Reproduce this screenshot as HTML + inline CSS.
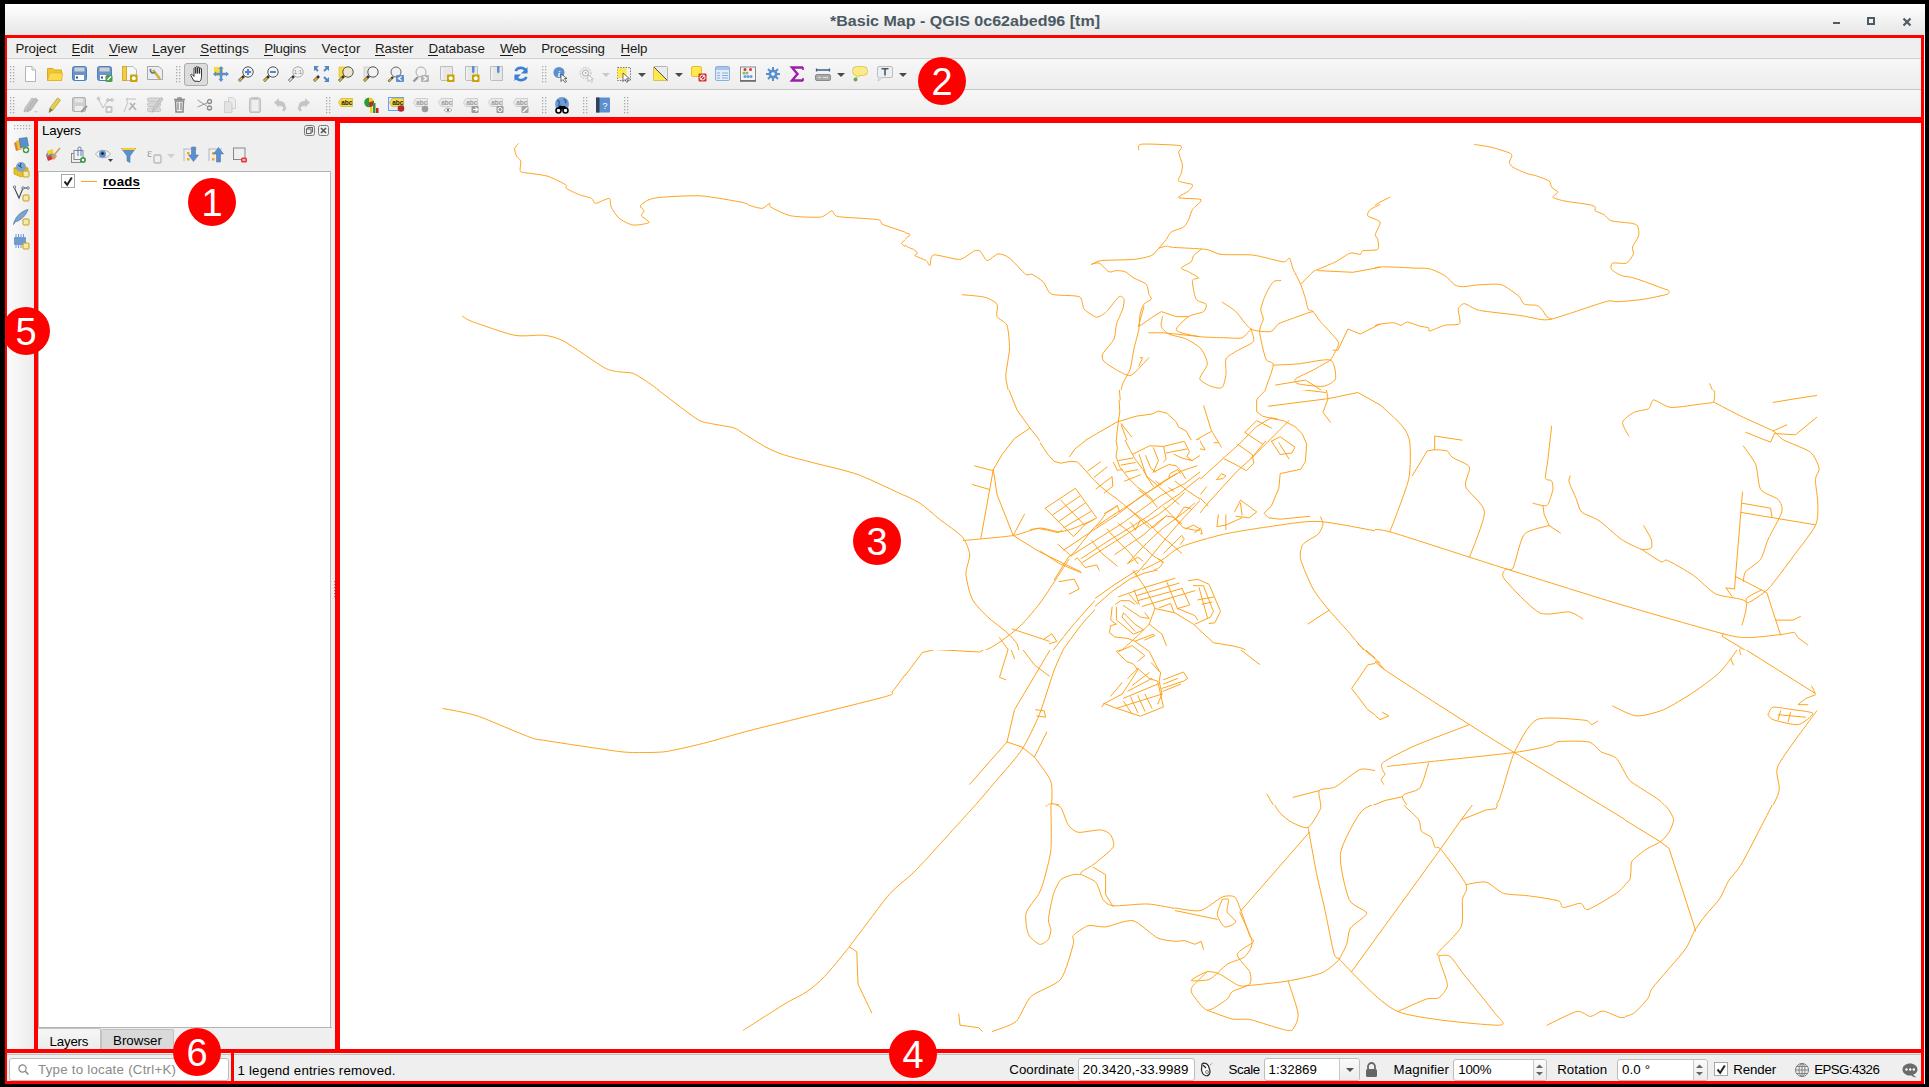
<!DOCTYPE html>
<html><head><meta charset="utf-8">
<style>
*{box-sizing:border-box;margin:0;padding:0}
html,body{width:1929px;height:1087px;overflow:hidden;background:#000}
body{position:relative;font-family:"Liberation Sans",sans-serif;font-size:13.3px;color:#000}
.a{position:absolute}
.t{position:absolute;white-space:pre;line-height:1}
.red{position:absolute;background:#f00}
.circ{position:absolute;width:48px;height:48px;border-radius:50%;background:#f00;color:#fff;font-size:38px;line-height:50px;text-align:center;font-family:"Liberation Sans",sans-serif}
.grip{position:absolute;width:5px;background-image:radial-gradient(circle at 1px 1px,#a8a8a8 0.7px,transparent 1px);background-size:3px 3px}
.box{position:absolute;background:#fff;border:1px solid #b9b9b9;border-radius:3px}
svg.i{position:absolute;overflow:visible}
</style></head><body>
<!-- window -->
<div class="a" style="left:5px;top:4px;width:1920px;height:1080px;background:#efefef"></div>
<!-- title bar -->
<div class="a" style="left:5px;top:4px;width:1920px;height:31px;background:linear-gradient(#ffffff,#e6e6e6)"></div>
<div class="a" style="left:1833px;top:22px;width:7px;height:2px;background:#4d5b64"></div>
<div class="a" style="left:1867px;top:17px;width:8px;height:8px;border:2px solid #4d5b64"></div>
<svg class="a" style="left:1902px;top:17px" width="10" height="10"><path d="M1.5 1.5L8.5 8.5M8.5 1.5L1.5 8.5" stroke="#4d5b64" stroke-width="2.2"/></svg>

<!-- menu bar -->
<div class="a" style="left:7px;top:38px;width:1914px;height:21px;background:#efefef;border-bottom:1px solid #d0d0d0"></div>

<!-- toolbars -->
<div class="a" style="left:7px;top:59px;width:1914px;height:31px;background:linear-gradient(#f7f7f7,#ededed);border-bottom:1px solid #c6c6c6"></div>
<div class="a" style="left:7px;top:90px;width:1914px;height:27px;background:linear-gradient(#f7f7f7,#eeeeee)"></div>

<!-- left strip -->
<div class="a" style="left:7px;top:121px;width:27px;height:928px;background:linear-gradient(90deg,#fbfbfb,#ececec)"></div>

<!-- layers panel -->
<div class="a" style="left:38px;top:121px;width:297px;height:928px;background:#efefef"></div>
<div class="a" style="left:38px;top:171px;width:293px;height:857px;background:#fff;border:1px solid #b4b4b4"></div>

<!-- map -->
<div class="a" style="left:340px;top:121px;width:1581px;height:928px;background:#fff;overflow:hidden">
<svg width="1581" height="928" viewBox="340 121 1581 928" style="position:absolute;left:0;top:0" fill="none" stroke="#ffa31c" stroke-width="1" stroke-linejoin="round" stroke-linecap="round">
<defs><clipPath id="c0"><rect x="340" y="121" width="565" height="269"/></clipPath><clipPath id="c1"><rect x="905" y="121" width="477" height="269"/></clipPath><clipPath id="c2"><rect x="1375" y="121" width="546" height="269"/></clipPath><clipPath id="c3"><rect x="340" y="390" width="565" height="260"/></clipPath><clipPath id="c4"><path clip-rule="evenodd" d="M905 390H1375V650H905Z M1095 570V650H1235V570Z"/></clipPath><clipPath id="c5"><rect x="1375" y="390" width="546" height="260"/></clipPath><clipPath id="c6"><rect x="340" y="650" width="565" height="155"/></clipPath><clipPath id="c7"><path clip-rule="evenodd" d="M905 650H1375V805H905Z M1095 650V725H1235V650Z"/></clipPath><clipPath id="c8"><rect x="1375" y="650" width="546" height="155"/></clipPath><clipPath id="c9"><rect x="340" y="805" width="835" height="244"/></clipPath><clipPath id="c10"><rect x="1175" y="805" width="450" height="244"/></clipPath><clipPath id="c11"><rect x="1625" y="805" width="296" height="244"/></clipPath><clipPath id="c12"><path clip-rule="evenodd" d="M1030 400H1310V560H1030Z M1040 440V560H1200V440Z"/></clipPath><clipPath id="c13"><rect x="1040" y="440" width="160" height="140"/></clipPath><clipPath id="c14"><rect x="1095" y="570" width="140" height="155"/></clipPath><clipPath id="c15"><rect x="340" y="121" width="1581" height="928"/></clipPath></defs><path clip-path="url(#c0)" d="M518.3 143.7 C517.9 144.2 514.8 147.2 514.6 148.6 C514.4 150.1 515.9 154.7 516.6 156.1 C517.3 157.6 520.4 159.5 520.8 161.1 C521.2 162.7 519.9 168.5 520.1 169.8 C520.3 171.1 519.4 171.6 522.6 172.3 C525.7 173.0 541.9 174.6 547.0 176.0 C552.0 177.5 563.3 183.3 565.6 184.7 C567.9 186.2 564.8 187.3 566.4 188.5 C568.0 189.6 576.3 193.5 579.3 194.7 C582.3 195.8 589.9 197.4 591.7 198.4 C593.6 199.4 593.4 203.4 595.5 203.4 C597.5 203.4 607.3 198.0 609.2 198.4 C611.0 198.8 610.0 204.8 611.2 207.1 C612.3 209.4 616.6 216.2 619.1 218.3 C621.6 220.4 629.3 224.5 632.8 225.0 C636.3 225.5 648.0 223.6 649.0 222.5 C650.0 221.5 642.1 217.2 641.5 215.8 C640.9 214.5 644.1 212.0 644.0 210.8 C643.9 209.7 639.7 207.2 640.3 205.9 C640.8 204.6 646.4 200.7 649.0 199.7 C651.6 198.6 656.6 197.6 662.7 197.2 C668.8 196.7 692.1 195.3 701.2 195.9 C710.4 196.5 735.2 201.0 741.0 202.1 C746.8 203.3 748.5 205.1 751.0 205.9 C753.5 206.6 760.0 208.6 762.2 208.4 C764.4 208.1 768.6 203.5 769.7 203.4 C770.7 203.2 768.4 205.7 770.9 207.1 C773.4 208.6 785.0 214.7 790.8 215.8 C796.6 217.0 815.9 217.6 820.7 217.1 C825.5 216.5 829.8 210.9 831.9 210.8 C833.9 210.8 832.7 215.6 838.1 216.6 C843.5 217.6 872.7 218.6 877.9 219.6 C883.1 220.5 879.1 222.8 882.9 224.5 C886.6 226.3 907.8 232.3 910.0 234.5 C912.2 236.7 901.5 241.5 901.5 243.2 C901.5 244.9 909.0 248.7 910.0 249.4 M462.3 316.1 C463.5 316.7 466.2 319.3 472.3 321.6 C478.4 323.8 506.2 333.7 514.6 335.3 C523.0 336.9 538.7 334.5 544.5 335.3 C550.3 336.0 557.4 337.7 564.4 341.5 C571.3 345.3 597.8 364.1 604.2 367.6 C610.6 371.2 615.8 371.2 619.1 371.8 C622.5 372.5 629.6 372.2 632.8 373.3 C636.0 374.4 642.7 378.8 646.5 381.3 C650.3 383.8 663.0 393.4 665.1 395.0"/>
<path clip-path="url(#c1)" d="M900.0 232.0 C901.2 232.3 909.7 233.3 910.0 234.5 C910.2 235.6 902.8 240.5 902.5 242.0 C902.2 243.4 906.2 246.1 907.5 246.9 C908.8 247.8 912.5 248.7 913.7 249.4 C914.8 250.1 917.3 252.4 917.4 253.1 C917.6 253.9 913.9 254.8 914.9 255.6 C915.9 256.5 924.4 259.5 926.1 260.6 C927.9 261.8 929.0 266.3 929.9 265.6 C930.7 264.9 930.1 255.6 933.6 254.9 C937.1 254.2 954.9 259.9 959.7 259.4 C964.5 258.9 972.2 251.5 974.7 250.7 C977.1 249.8 979.4 250.7 980.9 251.9 C982.3 253.1 985.1 260.4 987.1 260.6 C989.1 260.8 995.7 254.2 998.3 253.9 C1000.9 253.6 1006.3 255.7 1009.5 258.1 C1012.7 260.5 1023.0 272.4 1025.7 274.3 C1028.3 276.2 1029.8 273.4 1031.9 274.3 C1033.9 275.2 1040.8 279.4 1043.1 281.8 C1045.4 284.1 1047.6 292.5 1051.8 294.2 C1056.0 295.9 1075.4 295.0 1079.2 296.7 C1082.9 298.4 1082.1 306.8 1084.1 309.1 C1086.2 311.5 1094.0 316.8 1096.6 317.1 C1099.2 317.4 1103.9 314.0 1106.5 311.6 C1109.1 309.2 1116.9 298.1 1119.0 296.7 C1121.0 295.2 1123.5 297.7 1124.0 299.2 C1124.4 300.6 1123.6 306.2 1122.7 309.1 C1121.8 312.0 1117.5 320.6 1116.5 324.1 C1115.5 327.6 1115.6 335.5 1114.0 339.0 C1112.4 342.5 1104.0 351.3 1102.8 353.9 C1101.6 356.5 1102.2 359.4 1104.0 361.4 C1105.9 363.4 1115.8 369.7 1119.0 371.3 C1122.2 372.9 1127.9 376.7 1131.4 375.1 C1134.9 373.5 1146.8 359.7 1148.8 357.7 M1138.9 149.9 C1139.2 149.2 1136.7 144.7 1141.4 144.2 C1146.0 143.6 1174.0 144.9 1178.7 145.4 C1183.3 145.9 1181.2 147.8 1181.2 148.6 C1181.2 149.5 1178.5 150.5 1178.7 152.4 C1178.8 154.3 1182.1 162.3 1182.4 164.8 C1182.7 167.3 1181.6 171.6 1181.2 173.5 C1180.7 175.4 1177.4 179.7 1178.7 181.0 C1180.0 182.3 1191.2 183.6 1192.4 184.7 C1193.5 185.9 1190.2 189.4 1188.6 190.9 C1187.1 192.5 1177.2 196.6 1178.7 197.7 C1180.1 198.7 1199.5 198.3 1201.1 199.7 C1202.7 201.0 1193.8 207.3 1192.4 209.6 C1190.9 211.9 1189.7 217.5 1188.6 219.6 C1187.6 221.6 1185.7 225.6 1183.7 227.0 C1181.6 228.5 1173.3 230.5 1171.2 232.0 C1169.2 233.4 1167.7 237.6 1166.3 239.5 C1164.8 241.4 1160.5 246.3 1158.8 248.2 C1157.0 250.1 1154.2 254.3 1151.3 255.6 C1148.4 256.9 1139.7 258.8 1133.9 259.4 C1128.1 260.0 1106.5 260.0 1101.6 260.6 C1096.6 261.2 1092.8 263.9 1091.6 264.3 M1158.8 248.2 C1159.7 247.9 1164.5 246.3 1166.3 246.2 C1168.0 246.1 1169.1 247.0 1173.7 247.4 C1178.4 247.8 1200.5 248.6 1206.1 249.4 C1211.6 250.2 1215.5 253.7 1221.0 254.4 C1226.5 255.1 1246.1 254.3 1253.3 255.1 C1260.6 256.0 1279.0 261.5 1283.2 261.9 C1287.4 262.2 1288.3 257.3 1289.4 258.1 C1290.6 259.0 1291.9 266.3 1293.2 269.3 C1294.5 272.4 1299.2 280.8 1300.6 284.3 C1302.1 287.7 1304.7 296.3 1305.6 299.2 C1306.5 302.1 1307.2 307.7 1308.1 309.1 C1309.0 310.6 1311.6 310.2 1313.1 311.6 C1314.5 313.1 1317.6 318.1 1320.5 321.6 C1323.4 325.1 1336.2 338.0 1337.9 341.5 C1339.7 345.0 1336.3 349.3 1335.5 351.4 C1334.6 353.6 1331.1 359.1 1330.5 360.1 M1091.6 264.3 C1092.5 264.2 1097.0 262.2 1099.1 263.1 C1101.1 264.0 1107.0 270.9 1109.0 271.8 C1111.1 272.7 1114.6 270.6 1116.5 270.6 C1118.4 270.6 1123.2 270.9 1125.2 271.8 C1127.2 272.7 1131.4 276.6 1133.9 278.0 C1136.4 279.5 1144.6 282.4 1146.3 284.3 C1148.1 286.1 1148.3 292.5 1148.8 294.2 C1149.4 295.9 1151.9 298.0 1151.3 299.2 C1150.7 300.3 1145.2 302.4 1143.9 304.2 C1142.6 305.9 1140.7 311.2 1140.1 314.1 C1139.5 317.0 1139.6 325.0 1138.9 329.0 C1138.2 333.1 1134.9 344.3 1133.9 349.0 C1132.9 353.6 1131.5 364.8 1130.2 368.9 C1128.9 372.9 1123.9 380.7 1122.7 383.8 C1121.5 386.8 1120.5 393.7 1120.2 395.0 M1201.1 249.4 C1200.2 250.1 1194.8 254.2 1193.6 255.6 C1192.5 257.1 1192.6 260.4 1191.1 261.9 C1189.7 263.3 1181.5 266.9 1181.2 268.1 C1180.9 269.2 1186.6 270.7 1188.6 271.8 C1190.7 273.0 1198.2 277.0 1198.6 278.0 C1199.0 279.0 1192.7 278.1 1192.4 280.5 C1192.1 283.0 1194.5 296.4 1196.1 299.2 C1197.7 301.9 1205.2 302.7 1206.1 304.2 C1206.9 305.6 1205.6 310.2 1203.6 311.6 C1201.5 313.1 1191.8 314.4 1188.6 316.6 C1185.5 318.8 1175.0 328.0 1176.2 330.3 C1177.4 332.6 1192.8 335.6 1198.6 336.5 C1204.4 337.4 1220.9 337.6 1226.0 337.8 C1231.1 337.9 1239.2 338.8 1242.1 337.8 C1245.0 336.7 1249.8 330.1 1250.9 329.0 M1138.9 326.6 L1151.3 317.8 L1161.3 311.6 L1176.2 316.6 L1188.6 316.6 M1148.8 332.8 L1163.8 332.8 L1198.6 336.5 M1162.5 316.6 C1162.4 317.8 1160.5 324.5 1161.3 326.6 C1162.0 328.6 1165.8 332.6 1168.7 334.0 C1171.6 335.5 1182.4 337.3 1186.2 339.0 C1189.9 340.7 1198.6 346.0 1201.1 349.0 C1203.6 351.9 1207.5 360.4 1207.3 363.9 C1207.2 367.4 1199.4 376.2 1199.8 378.8 C1200.3 381.4 1208.4 385.3 1211.0 386.3 C1213.7 387.3 1220.5 389.0 1222.2 387.5 C1224.0 386.1 1225.5 377.2 1226.0 373.8 C1226.4 370.5 1224.8 361.5 1226.0 358.9 C1227.1 356.3 1232.7 353.5 1235.9 351.4 C1239.1 349.4 1251.6 344.1 1253.3 341.5 C1255.1 338.9 1251.1 330.5 1250.9 329.0 M1222.2 302.2 C1223.8 303.3 1232.6 308.5 1235.9 311.6 C1239.3 314.8 1246.8 326.7 1250.9 329.0 C1254.9 331.4 1267.6 332.1 1270.8 331.5 C1274.0 331.0 1275.9 325.5 1278.2 324.1 C1280.5 322.6 1287.2 320.4 1290.7 319.1 C1294.2 317.8 1305.5 313.7 1308.1 312.9 C1310.7 312.0 1312.5 311.8 1313.1 311.6 M1280.7 280.5 C1279.8 280.7 1275.0 280.2 1273.3 281.8 C1271.5 283.4 1267.2 291.0 1265.8 294.2 C1264.3 297.4 1261.1 306.2 1260.8 309.1 C1260.5 312.0 1263.4 316.5 1263.3 319.1 C1263.2 321.7 1259.3 326.9 1259.6 331.5 C1259.9 336.2 1264.2 355.0 1265.8 358.9 C1267.4 362.8 1273.5 360.9 1273.3 365.1 C1273.0 369.3 1264.5 391.5 1263.3 395.0 M1300.6 284.3 C1302.1 282.8 1311.0 273.6 1313.1 271.8 C1315.1 270.1 1315.4 270.5 1318.0 269.3 C1320.7 268.2 1331.7 263.7 1335.5 261.9 C1339.2 260.0 1347.5 254.0 1350.4 253.1 C1353.3 252.3 1358.9 254.7 1360.3 254.4 C1361.8 254.1 1360.8 251.2 1362.8 250.7 C1364.9 250.1 1376.0 250.7 1377.8 249.4 C1379.5 248.1 1378.1 241.2 1377.8 239.5 C1377.5 237.7 1375.0 236.5 1375.3 234.5 C1375.5 232.5 1380.9 224.2 1380.0 222.0 C1379.1 219.9 1368.9 217.3 1367.8 215.8 C1366.7 214.4 1368.9 210.9 1370.3 209.6 C1371.7 208.3 1378.9 205.2 1380.0 204.6 M1318.0 270.6 L1352.9 272.3 L1380.0 267.3 M1273.3 365.1 C1276.2 365.0 1291.5 364.5 1298.1 363.9 C1304.8 363.3 1326.1 358.4 1330.5 360.1 C1334.8 361.9 1336.3 375.8 1335.5 378.8 C1334.6 381.9 1327.4 385.7 1323.0 386.3 C1318.7 386.9 1301.3 384.7 1298.1 383.8 C1294.9 382.9 1293.9 380.4 1295.6 378.8 C1297.4 377.2 1309.0 372.3 1313.1 370.1 C1317.1 367.9 1328.4 361.3 1330.5 360.1 M1275.7 385.0 L1305.6 380.1 L1323.0 391.3 L1333.0 395.0 M962.2 294.7 C964.8 295.0 980.5 296.1 984.6 297.2 C988.7 298.3 995.6 301.9 997.0 304.2 C998.5 306.4 995.9 314.1 997.0 316.6 C998.2 319.1 1005.5 321.5 1007.0 325.3 C1008.4 329.1 1009.6 343.0 1009.5 349.0 C1009.3 354.9 1005.8 371.0 1005.8 376.3 C1005.8 381.7 1009.1 392.8 1009.5 395.0 M1380.0 324.1 L1360.3 334.0 L1347.9 329.0 L1337.9 350.2 L1333.0 350.2 M1143.9 306.6 L1138.4 326.6 M1140.1 357.7 L1142.6 357.7 L1138.9 366.4"/>
<path clip-path="url(#c2)" d="M1389.9 197.2 L1380.0 202.1 L1370.0 208.4 M1474.5 144.4 C1476.5 144.8 1487.9 146.4 1491.9 147.4 C1496.0 148.4 1507.0 151.9 1509.3 152.9 C1511.7 153.9 1511.8 155.0 1511.8 156.1 C1511.8 157.2 1509.2 161.0 1509.3 162.3 C1509.5 163.6 1511.0 166.0 1513.1 167.3 C1515.1 168.6 1524.0 172.5 1526.8 173.5 C1529.5 174.5 1534.1 175.1 1536.7 176.0 C1539.3 176.9 1547.4 179.7 1549.2 181.0 C1550.9 182.3 1550.6 185.9 1551.6 187.2 C1552.7 188.5 1557.7 191.0 1557.9 192.2 C1558.0 193.3 1552.2 196.1 1552.9 197.2 C1553.6 198.2 1559.9 200.0 1564.1 200.9 C1568.3 201.8 1585.3 203.9 1589.0 204.6 C1592.6 205.4 1594.5 206.4 1595.2 207.1 C1595.9 207.8 1594.2 210.0 1595.2 210.8 C1596.2 211.7 1602.0 213.4 1603.9 214.6 C1605.8 215.7 1608.2 219.8 1611.4 220.8 C1614.6 221.8 1628.2 222.7 1631.3 223.3 C1634.3 223.9 1636.6 224.3 1637.5 225.8 C1638.4 227.2 1639.3 233.3 1638.7 235.7 C1638.2 238.2 1633.2 244.8 1632.5 246.9 C1631.9 249.1 1634.0 252.5 1633.3 254.4 C1632.5 256.3 1628.7 262.1 1626.3 263.1 C1623.9 264.1 1614.4 262.4 1612.6 263.1 C1610.9 263.8 1610.4 267.9 1611.4 269.3 C1612.4 270.8 1619.0 274.6 1621.3 275.5 C1623.6 276.5 1628.7 276.6 1631.3 277.3 C1633.9 278.0 1639.9 279.9 1643.7 281.3 C1647.5 282.6 1660.7 287.7 1663.6 288.7 C1666.5 289.8 1668.2 289.8 1668.6 290.5 C1669.0 291.1 1670.3 293.2 1667.4 294.2 C1664.5 295.2 1649.4 298.3 1643.7 299.2 C1638.1 300.1 1622.9 301.5 1618.8 301.7 C1614.8 301.9 1611.8 300.5 1608.9 300.9 C1606.0 301.4 1598.3 304.0 1594.0 305.4 C1589.6 306.8 1576.5 311.3 1571.6 312.9 C1566.6 314.5 1555.1 318.3 1551.6 319.1 C1548.2 319.9 1545.5 320.0 1541.7 319.6 C1537.9 319.2 1526.6 316.4 1519.3 315.4 C1512.0 314.3 1485.9 311.7 1479.5 310.4 C1473.1 309.0 1467.0 303.8 1464.6 303.7 C1462.1 303.5 1458.9 306.8 1458.3 309.1 C1457.8 311.5 1461.2 321.7 1459.6 323.6 C1458.0 325.5 1448.1 324.4 1444.7 325.3 C1441.2 326.2 1431.6 330.7 1429.7 331.0 C1427.8 331.3 1429.6 328.4 1428.5 327.8 C1427.3 327.2 1422.2 326.7 1419.8 326.1 C1417.3 325.4 1409.5 322.2 1407.3 322.1 C1405.1 322.0 1402.7 325.2 1401.1 325.3 C1399.5 325.4 1396.1 323.0 1393.6 322.8 C1391.2 322.7 1382.7 323.6 1380.0 324.1 C1377.2 324.6 1371.2 326.7 1370.0 327.1 M1370.0 268.8 C1371.5 268.6 1377.2 266.9 1382.4 266.8 C1387.7 266.7 1409.3 267.8 1414.8 268.1 C1420.3 268.3 1426.2 268.0 1429.7 268.8 C1433.2 269.7 1441.7 273.7 1444.7 275.5 C1447.6 277.4 1452.4 283.4 1454.6 284.8 C1456.8 286.1 1460.7 286.7 1463.3 286.7 C1465.9 286.8 1472.8 285.3 1477.0 285.0 C1481.2 284.7 1495.6 283.8 1499.4 284.3 C1503.2 284.7 1507.0 287.8 1509.3 289.2 C1511.7 290.7 1517.6 295.0 1519.3 296.7 C1521.0 298.4 1522.2 303.1 1524.3 304.2 C1526.3 305.2 1534.7 304.8 1536.7 305.4 C1538.8 306.0 1540.5 307.8 1541.7 309.1 C1542.9 310.4 1545.5 315.4 1546.7 316.6 C1547.8 317.8 1551.1 318.8 1551.6 319.1 M1709.7 383.8 L1714.6 395.0"/>
<path clip-path="url(#c3)" d="M651.5 385.0 C656.7 388.9 689.3 414.1 696.3 418.6 C703.2 423.1 706.8 422.5 711.2 423.6 C715.5 424.6 729.8 426.6 733.6 427.8 C737.4 429.0 739.8 431.3 743.5 433.5 C747.3 435.8 761.3 444.7 765.9 447.2 C770.6 449.7 778.1 452.9 783.3 454.7 C788.6 456.4 802.0 459.8 810.7 462.1 C819.4 464.5 846.4 470.4 858.0 474.6 C869.6 478.8 903.9 495.5 910.0 498.2"/>
<path clip-path="url(#c4)" d="M1007.0 385.0 L1017.0 409.9 L1029.9 428.0 M1119.0 385.0 L1120.2 399.9 M1049.3 655.0 C1052.2 651.4 1067.8 631.3 1074.2 623.9 C1080.6 616.5 1097.1 597.3 1104.0 591.5 C1111.0 585.7 1127.2 577.7 1133.9 574.1 C1140.6 570.5 1155.8 563.6 1161.3 560.4 C1166.8 557.2 1173.9 549.8 1181.2 546.7 C1188.4 543.7 1213.3 536.6 1223.5 534.3 C1233.6 532.0 1257.2 528.3 1268.3 526.8 C1279.3 525.3 1305.0 520.8 1318.0 521.4 C1331.1 521.9 1372.8 530.6 1380.0 531.8 M1059.3 655.0 C1062.2 651.1 1078.0 628.5 1084.1 621.4 C1090.2 614.3 1105.1 599.2 1111.5 594.0 C1117.9 588.8 1133.4 579.7 1138.9 576.6 C1144.4 573.6 1156.0 569.6 1158.8 567.9 C1161.5 566.2 1162.5 562.7 1162.5 561.7 C1162.5 560.7 1159.2 559.5 1158.8 559.2 M900.0 493.2 C902.3 494.4 915.3 500.1 919.9 503.2 C924.6 506.2 934.9 515.5 939.8 519.4 C944.7 523.3 958.7 532.7 962.2 536.8 C965.7 540.9 969.2 549.9 969.7 554.2 C970.1 558.6 965.7 568.9 965.9 574.1 C966.2 579.3 969.7 594.1 972.2 599.0 C974.6 603.9 983.0 612.5 987.1 616.4 C991.2 620.3 1003.5 629.4 1007.0 632.6 C1010.5 635.8 1015.5 641.2 1017.0 643.8 C1018.4 646.4 1019.1 653.7 1019.4 655.0 M963.5 540.5 C969.3 539.9 1004.4 537.0 1013.2 535.5 C1022.1 534.1 1034.0 528.5 1039.3 528.1 C1044.7 527.6 1055.2 531.8 1059.3 531.8 C1063.3 531.8 1070.1 529.5 1074.2 528.1 C1078.2 526.6 1091.8 520.4 1094.1 519.4 M1029.4 428.5 L1014.5 438.5 L1002.0 454.7 L993.3 469.6 L980.9 538.0 M993.3 469.6 L997.0 494.5 L1013.2 535.5 L1024.4 514.4 M1013.2 535.5 L1039.3 551.7 L1080.4 571.6 M974.7 465.9 L993.3 470.8 M972.2 484.5 L989.6 489.5 M1270.8 385.0 L1258.3 397.4 L1256.8 399.9 M1320.5 516.9 C1320.8 517.8 1323.3 522.3 1323.0 524.3 C1322.7 526.4 1320.4 532.0 1318.0 534.3 C1315.7 536.6 1305.1 541.4 1303.1 544.3 C1301.1 547.2 1299.5 554.0 1300.6 559.2 C1301.8 564.4 1309.9 583.2 1313.1 589.0 C1316.3 594.8 1323.9 604.0 1328.0 609.0 C1332.1 613.9 1343.3 626.0 1347.9 631.3 C1352.5 636.7 1365.5 652.2 1367.8 655.0 M1119.0 596.5 L1173.7 579.1 M1128.9 591.5 L1178.7 584.1 L1183.7 596.5 L1188.6 609.0 M1131.4 604.0 L1183.7 591.5 M1136.4 584.1 L1151.3 613.9 M1168.7 581.6 L1176.2 604.0 M1188.6 581.6 C1190.1 581.6 1198.5 580.4 1201.1 581.6 C1203.7 582.7 1209.0 588.0 1211.0 591.5 C1213.1 595.0 1218.2 607.7 1218.5 611.4 C1218.8 615.2 1216.1 622.4 1213.5 623.9 C1210.9 625.3 1199.9 625.6 1196.1 623.9 C1192.3 622.1 1185.2 611.3 1181.2 609.0 C1177.1 606.6 1163.9 604.0 1161.3 604.0 C1158.7 604.0 1159.1 608.4 1158.8 609.0 M1198.6 589.0 L1206.1 621.4 M1196.1 604.0 L1213.5 601.5 M1114.0 604.0 C1115.7 603.4 1126.0 598.4 1128.9 599.0 C1131.8 599.6 1136.6 606.0 1138.9 609.0 C1141.2 611.9 1148.0 620.7 1148.8 623.9 C1149.7 627.1 1147.5 633.4 1146.3 636.3 C1145.2 639.2 1140.0 646.6 1138.9 648.8 C1137.7 650.9 1136.7 654.3 1136.4 655.0 M1111.5 609.0 L1111.5 633.8 L1119.0 646.3 L1124.0 655.0 M1119.0 613.9 L1131.4 633.8 L1143.9 643.8 M1114.0 623.9 L1133.9 641.3 L1146.3 655.0 M1158.8 609.0 C1162.9 610.7 1188.1 620.4 1193.6 623.9 C1199.1 627.4 1202.6 636.5 1206.1 638.8 C1209.5 641.1 1219.1 642.6 1223.5 643.8 C1227.8 644.9 1240.2 647.5 1243.4 648.8 C1246.6 650.1 1250.0 654.3 1250.9 655.0 M1268.3 406.2 L1328.0 398.7 L1357.9 392.5 L1380.0 404.9 M1325.5 385.0 L1328.0 398.7 L1323.0 412.4 L1330.5 422.3 M1273.3 386.2 L1325.5 392.5 M1308.1 623.9 L1315.6 618.9 L1329.2 610.2 M1044.3 638.8 L1051.8 633.8 L1056.8 641.3 L1049.3 643.8 M1059.3 581.6 L1074.2 579.1 L1079.2 589.0 L1069.2 594.0 M1012.0 628.9 L1049.3 641.3 M999.5 637.6 L1012.0 655.0 M900.0 655.0 C902.9 654.5 915.3 651.7 924.9 651.3 C934.5 650.8 971.4 653.9 982.1 651.3 C992.9 648.6 1010.3 634.4 1017.0 628.9 C1023.6 623.3 1034.4 610.4 1039.3 604.0 C1044.3 597.6 1055.8 579.3 1059.3 574.1 C1062.7 568.9 1068.0 560.9 1069.2 559.2"/>
<path clip-path="url(#c5)" d="M1370.0 529.3 C1372.3 529.6 1378.3 528.6 1389.9 531.8 C1401.5 535.1 1455.9 552.8 1469.5 557.2 C1483.2 561.5 1489.4 563.7 1506.9 569.1 C1524.3 574.6 1593.6 596.4 1618.8 604.0 C1644.1 611.5 1708.2 629.9 1723.3 633.8 C1738.4 637.8 1741.6 637.5 1748.2 637.6 C1754.9 637.7 1775.2 635.2 1780.6 634.6 C1785.9 634.0 1792.2 632.2 1794.3 632.6 C1796.3 632.9 1796.4 636.1 1798.0 637.6 C1799.6 639.0 1806.8 644.2 1807.9 645.0 M1370.0 401.2 C1371.2 401.6 1376.2 402.0 1380.0 404.9 C1383.7 407.8 1398.9 421.7 1402.3 426.1 C1405.8 430.4 1409.1 436.0 1409.8 442.2 C1410.5 448.5 1410.9 469.1 1408.6 479.6 C1406.2 490.0 1392.1 525.7 1389.9 531.8 M1412.3 475.8 L1427.2 450.9 L1434.7 449.7 L1434.7 436.0 L1462.1 440.2 M1434.7 449.7 C1436.1 449.8 1445.1 450.1 1447.1 450.9 C1449.2 451.8 1449.8 455.6 1452.1 457.2 C1454.4 458.8 1465.0 463.2 1467.0 464.6 C1469.1 466.1 1469.7 467.0 1469.5 469.6 C1469.4 472.2 1464.1 482.1 1465.8 487.0 C1467.5 492.0 1484.0 503.7 1484.5 511.9 C1484.9 520.1 1471.3 551.9 1469.5 557.2 M1551.6 426.1 C1551.2 430.0 1548.6 453.6 1547.9 459.7 C1547.2 465.7 1545.0 475.8 1545.4 478.3 C1545.9 480.8 1550.8 479.5 1551.6 480.8 C1552.5 482.1 1553.3 486.8 1552.9 489.5 C1552.5 492.3 1549.1 502.6 1547.9 504.4 C1546.8 506.3 1544.7 505.8 1542.9 505.7 C1541.2 505.5 1534.1 503.5 1533.0 503.2 M1542.9 505.7 L1544.2 514.4 L1549.2 525.6 L1560.4 533.1 M1549.2 525.6 C1546.3 526.6 1528.5 529.4 1524.3 534.3 C1520.1 539.2 1515.3 563.8 1513.1 567.9 C1510.9 572.0 1506.6 567.8 1505.6 569.1 C1504.6 570.4 1500.5 574.0 1504.4 579.1 C1508.3 584.2 1531.7 608.9 1539.2 612.7 C1546.8 616.5 1564.0 611.2 1569.1 611.9 C1574.1 612.7 1581.2 618.1 1582.8 618.9 M1570.3 475.8 C1570.2 476.6 1568.3 479.3 1569.1 482.0 C1569.8 484.8 1575.1 496.0 1576.5 499.5 C1578.0 502.9 1578.9 509.4 1581.5 511.9 C1584.1 514.4 1594.3 517.4 1598.9 520.6 C1603.6 523.8 1616.4 535.9 1621.3 539.3 C1626.3 542.6 1637.7 548.2 1641.2 549.2 C1644.7 550.2 1650.0 549.1 1651.2 548.0 C1652.3 546.8 1652.1 541.9 1651.2 539.3 C1650.3 536.7 1644.6 527.2 1643.7 525.6 M1641.2 549.2 C1643.6 550.7 1658.1 560.4 1661.1 561.7 C1664.2 563.0 1663.6 558.8 1667.4 560.4 C1671.1 562.0 1687.8 571.4 1693.5 575.4 C1699.1 579.3 1709.8 591.0 1715.9 594.0 C1722.0 597.1 1742.7 597.9 1745.7 601.5 C1748.8 605.1 1742.4 622.4 1742.0 625.1 M1628.8 436.0 C1628.1 434.4 1622.0 425.1 1622.6 422.3 C1623.1 419.6 1630.7 414.0 1633.8 412.4 C1636.8 410.8 1646.4 410.1 1648.7 408.6 C1651.0 407.2 1651.1 400.1 1653.7 399.9 C1656.3 399.8 1665.3 407.0 1671.1 407.4 C1676.9 407.8 1698.5 404.3 1703.4 403.7 C1708.4 403.0 1712.1 403.2 1713.4 401.9 C1714.7 400.6 1714.9 394.4 1714.6 392.5 C1714.3 390.5 1711.3 385.9 1710.9 385.0 M1713.4 401.9 C1716.9 403.7 1736.3 414.0 1743.3 417.3 C1750.2 420.7 1768.5 428.4 1773.1 431.0 C1777.8 433.6 1778.7 437.3 1783.1 439.7 C1787.4 442.2 1806.2 448.8 1810.4 452.2 C1814.6 455.5 1818.6 465.2 1819.1 468.4 C1819.7 471.6 1815.6 475.3 1815.4 479.6 C1815.3 483.8 1817.9 499.1 1817.9 504.4 C1817.9 509.8 1818.3 519.5 1815.4 525.6 C1812.5 531.7 1798.5 549.3 1793.0 556.7 C1787.5 564.1 1773.4 583.7 1768.1 589.0 C1762.9 594.4 1750.7 601.7 1748.2 602.7 C1745.8 603.7 1745.5 599.2 1747.0 597.8 C1748.4 596.3 1759.1 591.2 1760.7 590.3 M1773.1 431.0 L1786.8 424.8 M1745.7 432.3 L1770.6 442.2 L1774.4 433.5 L1795.5 434.8 L1816.7 417.3 M1773.1 402.4 L1795.5 398.7 L1816.7 395.5 M1743.3 446.0 C1744.7 448.1 1753.7 459.5 1755.7 464.6 C1757.7 469.7 1758.1 485.4 1760.7 489.5 C1763.3 493.6 1775.6 496.9 1778.1 499.5 C1780.6 502.1 1783.0 507.3 1781.8 511.9 C1780.7 516.6 1770.6 533.8 1768.1 539.3 C1765.7 544.8 1763.3 555.4 1760.7 559.2 C1758.1 563.0 1747.8 569.0 1745.7 571.6 C1743.7 574.2 1743.5 580.4 1743.3 581.6 M1742.5 492.0 L1734.5 589.0 L1725.8 587.8 L1732.1 596.5 M1742.0 503.2 L1770.6 508.2 L1771.9 516.9 M1740.8 512.4 L1815.4 524.8 M1735.8 576.6 L1766.9 592.8 L1780.6 635.1 M1775.6 620.1 L1793.0 620.1 L1800.5 616.4 M1723.3 633.8 L1722.1 636.3 L1753.2 655.0 M1733.3 655.0 L1740.8 648.8"/>
<path clip-path="url(#c6)" d="M442.9 708.5 C446.9 709.3 467.2 712.6 477.3 715.9 C487.4 719.3 521.4 734.2 529.5 737.1 C537.7 740.0 536.5 739.1 547.0 740.8 C557.4 742.5 608.1 750.1 619.1 751.5 C630.1 752.9 636.0 752.5 641.5 752.5 C647.0 752.5 659.1 752.6 666.4 751.5 C673.6 750.4 693.6 745.8 703.7 743.3 C713.9 740.7 732.6 735.0 753.5 729.6 C774.4 724.2 866.6 701.8 882.9 697.3 C899.1 692.8 889.7 694.5 892.8 691.0 C896.0 687.6 908.0 670.6 910.0 667.9 M872.9 915.0 L890.3 893.8 L910.0 875.2"/>
<path clip-path="url(#c7)" d="M900.0 682.3 L922.4 652.5 L934.8 649.5 L979.6 652.0 L992.1 645.0 M1009.5 645.0 L999.5 677.3 L1005.8 679.8 M1009.5 645.0 L1014.5 658.7 M1019.4 645.0 L1034.4 664.9 L1049.3 676.1 M1053.0 645.0 L1014.5 709.7 L1007.0 742.0 L969.7 784.3 M1065.5 645.0 C1064.2 647.9 1057.3 661.8 1054.3 669.9 C1051.2 678.0 1043.1 705.4 1039.3 714.7 C1035.6 724.0 1026.6 742.3 1021.9 749.5 C1017.3 756.8 1008.0 767.0 999.5 776.9 C991.1 786.8 961.4 821.6 949.8 834.1 C938.2 846.6 905.8 878.1 900.0 883.9 M1007.0 742.0 L1021.9 747.0 L1034.4 757.0 L1046.8 732.1 M1035.6 709.7 L1044.3 710.9 L1045.6 717.2 L1036.9 715.9 M1034.4 757.0 C1036.3 759.7 1048.5 775.1 1050.5 780.6 C1052.6 786.1 1051.9 796.3 1051.8 804.3 C1051.6 812.2 1050.8 839.8 1049.3 849.0 C1047.8 858.3 1042.1 876.2 1039.3 883.9 C1036.6 891.6 1027.3 911.4 1025.7 915.0 M1046.8 806.7 C1047.2 806.4 1048.8 803.8 1050.5 803.8 C1052.3 803.8 1059.3 803.8 1061.7 806.7 C1064.2 809.7 1069.4 826.0 1071.7 829.1 C1074.0 832.3 1077.9 833.6 1081.6 833.6 C1085.4 833.7 1100.6 829.0 1104.0 829.6 C1107.5 830.3 1110.5 836.8 1111.5 839.1 C1112.5 841.4 1115.1 845.9 1112.8 849.0 C1110.4 852.2 1095.4 863.7 1091.6 866.5 C1087.8 869.2 1084.0 870.8 1080.4 872.7 C1076.8 874.6 1063.5 879.6 1060.5 882.6 C1057.4 885.7 1055.0 895.0 1054.3 898.8 C1053.6 902.6 1054.3 913.1 1054.3 915.0 M1091.6 866.5 C1093.1 867.2 1102.6 870.1 1104.0 872.7 C1105.5 875.3 1102.9 884.9 1104.0 888.9 C1105.2 892.8 1108.5 904.4 1114.0 906.3 C1119.5 908.2 1141.2 904.5 1151.3 905.0 C1161.5 905.6 1192.7 912.6 1201.1 911.3 C1209.5 909.9 1219.4 895.3 1223.5 893.8 C1227.5 892.4 1233.9 896.3 1235.9 898.8 C1238.0 901.3 1240.3 913.1 1240.9 915.0 M1080.4 872.7 L1094.1 883.9 L1096.6 893.8 L1109.0 906.3 M1223.5 915.0 L1221.0 906.3 L1226.0 898.8 L1228.5 908.8 M1240.9 913.7 C1248.9 903.7 1300.0 840.2 1309.3 827.9 C1318.6 815.6 1319.4 812.3 1320.5 808.0 C1321.7 803.6 1317.5 793.0 1319.3 790.6 C1321.0 788.1 1330.7 789.3 1335.5 786.8 C1340.2 784.4 1355.1 771.2 1360.3 769.4 C1365.5 767.7 1377.7 771.6 1380.0 771.9 M1293.2 797.3 L1319.3 790.6 M1267.0 794.3 L1275.7 809.2 L1308.1 827.9 M1309.3 827.9 L1323.0 893.8 L1325.5 915.0 M1380.0 801.8 L1360.3 811.7 L1339.2 854.0 L1350.4 898.8 L1372.8 915.0 M1380.0 662.4 L1367.8 664.9 L1351.6 688.5 L1367.8 709.7 L1380.0 718.4 M1360.3 645.0 L1380.0 662.4 M1226.0 645.0 L1235.9 646.2 L1259.6 664.4 M1116.5 645.0 C1117.6 646.7 1124.1 657.6 1126.4 659.9 C1128.8 662.3 1135.5 662.9 1136.4 664.9 C1137.3 666.9 1135.4 674.7 1133.9 677.3 C1132.5 680.0 1126.9 685.0 1124.0 687.3 C1121.0 689.6 1111.3 695.2 1109.0 697.3 C1106.7 699.3 1103.2 703.4 1104.0 704.7 C1104.9 706.0 1114.2 708.7 1116.5 708.5 C1118.8 708.2 1120.2 704.0 1124.0 702.2 C1127.7 700.5 1144.5 695.0 1148.8 693.5 C1153.2 692.1 1159.5 688.5 1161.3 689.8 C1163.0 691.1 1166.1 701.7 1163.8 704.7 C1161.4 707.8 1145.4 714.6 1141.4 715.9 C1137.3 717.2 1131.5 717.8 1128.9 715.9 C1126.3 714.0 1120.1 701.6 1119.0 699.7 M1132.7 645.0 L1146.3 652.5 L1158.8 668.6 L1161.3 677.3 L1161.3 689.8 M1161.3 679.8 L1183.7 671.1 L1187.4 677.3 L1163.8 692.3 M1163.8 686.1 L1181.2 679.8 M1126.4 650.0 C1128.5 650.8 1143.4 655.1 1143.9 657.4 C1144.3 659.8 1132.8 666.8 1130.2 669.9 C1127.6 672.9 1121.2 681.4 1121.5 683.6 C1121.8 685.7 1129.2 688.7 1132.7 688.5 C1136.1 688.4 1149.1 683.1 1151.3 682.3 M1131.4 672.4 L1146.3 669.9 L1158.8 682.3 L1148.8 694.8 L1128.9 694.8 M1124.0 704.7 L1146.3 692.3 M1128.9 712.2 L1148.8 697.3 M1138.9 694.8 L1146.3 709.7 M1131.4 699.7 L1138.9 712.2 M1141.4 674.9 L1151.3 687.3 M1119.0 687.3 L1126.4 699.7 M1114.0 692.3 L1121.5 704.7 M1138.9 652.5 L1148.8 657.4 M1151.3 662.4 L1158.8 669.9"/>
<path clip-path="url(#c8)" d="M1370.0 655.0 C1371.7 656.7 1373.3 661.8 1384.9 669.9 C1396.5 678.0 1454.4 715.0 1469.5 724.6 C1484.6 734.3 1492.0 738.9 1514.3 752.5 C1536.7 766.1 1643.0 830.3 1661.1 841.6 C1679.3 852.8 1666.5 840.5 1669.8 849.0 C1673.2 857.6 1687.4 907.3 1689.8 915.0 M1370.0 663.7 L1377.5 661.9 L1384.9 669.9 M1370.0 710.9 L1380.0 719.7 L1388.7 715.9 L1382.4 712.2 M1469.5 724.6 C1463.1 727.1 1424.8 741.4 1414.8 745.8 C1404.8 750.1 1387.5 759.2 1383.7 762.0 C1379.9 764.7 1382.3 768.0 1382.4 769.4 C1382.6 770.9 1385.1 773.2 1384.9 774.4 C1384.8 775.6 1381.3 778.2 1381.2 779.4 C1381.1 780.5 1383.4 783.8 1383.7 784.3 M1387.4 766.4 C1392.1 765.9 1412.4 763.6 1427.2 762.0 C1442.0 760.3 1500.1 754.4 1514.3 752.5 C1528.5 750.6 1543.9 747.1 1549.2 745.8 C1554.4 744.5 1554.5 742.0 1559.1 741.5 C1563.8 741.1 1584.0 740.8 1589.0 742.0 C1593.9 743.3 1598.2 750.1 1601.4 752.0 C1604.6 753.9 1613.2 755.0 1616.3 758.2 C1619.5 761.4 1626.2 776.0 1628.8 779.4 C1631.4 782.7 1635.0 784.2 1638.7 786.8 C1642.5 789.4 1657.1 798.0 1661.1 801.8 C1665.2 805.5 1672.7 815.4 1673.6 819.2 C1674.4 823.0 1670.1 831.5 1668.6 834.1 C1667.1 836.7 1663.7 839.8 1661.1 841.6 C1658.5 843.3 1649.7 846.7 1646.2 849.0 C1642.7 851.4 1633.0 858.0 1631.3 861.5 C1629.5 865.0 1632.1 876.3 1631.3 878.9 C1630.4 881.5 1625.6 882.4 1623.8 883.9 C1622.1 885.3 1620.4 888.4 1616.3 891.3 C1612.3 894.2 1592.7 907.3 1589.0 908.8 C1585.2 910.2 1586.9 903.9 1584.0 903.8 C1581.1 903.6 1567.0 907.8 1564.1 907.5 C1561.2 907.2 1563.2 902.8 1559.1 901.3 C1555.0 899.8 1535.6 896.1 1529.3 895.1 C1522.9 894.1 1509.3 894.0 1504.4 892.6 C1499.4 891.1 1491.3 883.7 1487.0 882.6 C1482.6 881.6 1470.2 884.3 1467.0 883.9 C1463.9 883.4 1462.6 882.7 1459.6 878.9 C1456.5 875.1 1443.8 856.2 1440.9 851.5 C1438.0 846.9 1437.2 842.6 1434.7 839.1 C1432.2 835.6 1423.5 826.6 1419.8 821.7 C1416.0 816.7 1402.3 800.7 1402.3 796.8 C1402.3 792.9 1416.7 792.0 1419.8 788.1 C1422.8 784.2 1427.5 766.1 1428.5 763.2 M1370.0 806.7 L1384.9 800.5 L1402.3 796.8 M1392.4 915.0 C1397.9 907.3 1431.5 860.2 1439.7 849.0 C1447.8 837.9 1456.3 823.7 1462.1 819.2 C1467.9 814.7 1485.1 812.8 1489.4 810.5 C1493.8 808.2 1496.5 806.0 1499.4 799.3 C1502.3 792.5 1510.0 761.8 1514.3 752.5 C1518.7 743.2 1528.6 723.4 1536.7 719.7 C1544.8 715.9 1577.6 719.6 1584.0 720.1 C1590.4 720.7 1589.9 724.5 1591.5 724.6 C1593.1 724.7 1597.0 721.3 1597.7 720.9 M1467.0 883.9 L1460.8 898.8 L1463.3 915.0 M1612.6 706.0 C1615.4 707.1 1630.3 715.5 1636.3 715.9 C1642.2 716.4 1656.9 712.5 1663.6 709.7 C1670.3 706.9 1687.1 696.5 1693.5 692.3 C1699.9 688.1 1714.0 677.5 1718.4 673.6 C1722.7 669.7 1728.5 661.6 1730.8 658.7 C1733.1 655.8 1737.1 649.2 1738.3 648.7 C1739.4 648.3 1740.5 654.2 1740.8 655.0 M1738.3 645.0 L1815.4 693.5 L1811.7 686.1 M1815.4 694.8 L1805.5 698.5 L1798.0 704.7 L1807.9 704.7 M1816.7 710.9 C1812.2 717.3 1782.6 756.0 1778.1 765.7 C1773.6 775.4 1782.2 783.1 1778.1 794.3 C1774.0 805.5 1749.6 849.6 1743.3 861.5 C1736.9 873.4 1727.7 890.1 1723.3 896.3 C1719.0 902.6 1708.0 912.8 1705.9 915.0 M1768.1 714.7 C1768.7 713.8 1770.2 707.8 1773.1 707.2 C1776.0 706.6 1788.4 709.0 1793.0 709.7 C1797.7 710.4 1812.3 711.7 1812.9 713.4 C1813.5 715.2 1802.6 723.9 1798.0 724.6 C1793.3 725.4 1776.6 720.8 1773.1 719.7 C1769.6 718.5 1768.7 715.3 1768.1 714.7 M1780.6 710.9 L1778.1 719.7 M1790.5 712.2 L1788.0 722.1 M1778.1 714.7 L1805.5 717.2 M1730.8 658.7 L1733.3 664.9"/>
<path clip-path="url(#c9)" d="M979.9 800.0 C975.7 804.6 951.6 831.4 943.9 839.8 C936.2 848.2 920.4 865.8 914.0 872.2 C907.6 878.5 896.7 885.8 889.1 894.6 C881.6 903.3 856.8 937.2 849.3 946.8 C841.8 956.4 829.4 971.4 824.4 976.7 C819.5 981.9 811.6 988.4 807.0 991.6 C802.4 994.8 792.0 999.5 784.6 1004.0 C777.2 1008.5 748.3 1027.1 743.5 1030.2 M849.3 946.8 L856.8 951.8 L858.0 984.1 L871.7 1012.8 M1050.9 803.7 C1050.9 809.1 1051.7 840.6 1050.9 849.8 C1050.0 858.9 1044.8 876.9 1043.4 882.1 C1041.9 887.3 1040.4 890.9 1038.4 894.6 C1036.4 898.2 1027.1 908.6 1026.0 913.2 C1024.8 917.9 1026.9 930.7 1028.5 934.4 C1030.1 938.0 1037.3 943.7 1039.7 944.3 C1042.0 944.9 1047.1 941.1 1048.4 939.3 C1049.7 937.6 1050.9 931.7 1050.9 929.4 C1050.9 927.1 1048.1 923.5 1048.4 919.4 C1048.7 915.4 1051.9 899.2 1053.3 894.6 C1054.8 889.9 1058.5 881.9 1060.8 879.6 C1063.1 877.3 1070.9 875.2 1073.3 874.7 C1075.6 874.1 1079.8 874.7 1080.7 874.7 M1045.9 806.2 C1046.5 805.9 1049.1 803.6 1050.9 803.7 C1052.6 803.9 1058.8 805.0 1060.8 807.5 C1062.8 809.9 1066.2 822.0 1068.3 824.9 C1070.3 827.8 1074.5 831.8 1078.2 832.3 C1082.0 832.9 1096.8 829.6 1100.6 829.9 C1104.4 830.2 1109.1 832.8 1110.6 834.8 C1112.0 836.9 1115.1 843.8 1113.1 847.3 C1111.0 850.8 1096.9 861.6 1093.2 864.7 C1089.4 867.7 1080.4 871.4 1080.7 873.4 C1081.0 875.4 1093.0 879.1 1095.6 882.1 C1098.3 885.2 1101.1 896.8 1103.1 899.5 C1105.1 902.3 1107.8 905.2 1113.1 905.8 C1118.3 906.3 1140.1 903.6 1147.9 904.0 C1155.7 904.4 1176.3 908.8 1180.0 909.5 M1093.2 867.2 L1105.6 874.7 L1105.6 894.6 L1113.1 906.5 M958.8 1014.0 L960.0 1025.2 L978.7 1027.7 L982.4 1031.4 M992.4 1031.4 C995.1 1030.3 1011.5 1025.5 1016.0 1021.5 C1020.5 1017.4 1025.7 1001.5 1030.9 996.6 C1036.2 991.6 1055.9 985.3 1060.8 979.2 C1065.7 973.1 1071.8 949.4 1073.3 944.3 C1074.7 939.2 1071.5 937.8 1073.3 935.6 C1075.0 933.4 1084.4 926.7 1088.2 925.7 C1092.0 924.6 1100.4 927.5 1105.6 926.9 C1110.8 926.3 1126.9 919.4 1133.0 920.7 C1139.1 922.0 1152.4 935.6 1157.9 938.1 C1163.3 940.6 1177.4 941.4 1180.0 941.8"/>
<path clip-path="url(#c10)" d="M1272.0 800.0 C1272.9 801.5 1277.2 809.8 1279.5 812.4 C1281.8 815.1 1288.6 820.7 1291.9 822.4 C1295.3 824.1 1304.8 829.0 1308.1 827.4 C1311.4 825.8 1319.2 811.9 1320.5 808.7 C1321.9 805.5 1319.4 801.0 1319.3 800.0 M1308.1 827.4 C1309.1 832.9 1314.9 865.4 1316.8 874.7 C1318.7 883.9 1322.2 897.7 1324.3 907.0 C1326.3 916.3 1332.5 948.2 1334.2 954.3 C1336.0 960.4 1340.7 957.1 1339.2 959.3 C1337.8 961.4 1327.9 970.4 1321.8 972.9 C1315.7 975.5 1295.4 979.7 1287.0 981.2 C1278.5 982.6 1255.3 984.9 1249.6 985.4 C1244.0 985.9 1241.9 986.7 1238.4 985.4 C1234.9 984.1 1223.4 975.8 1219.8 974.2 C1216.1 972.6 1210.7 971.0 1207.3 971.7 C1204.0 972.4 1190.9 979.5 1191.2 980.4 C1191.4 981.3 1205.6 981.0 1209.8 979.2 C1214.0 977.3 1223.2 966.8 1227.2 964.2 C1231.3 961.6 1241.7 959.4 1244.7 956.8 C1247.6 954.2 1252.7 947.1 1252.1 941.8 C1251.5 936.6 1241.1 915.5 1239.7 912.0 M1309.3 832.3 L1240.9 910.7 M1386.5 800.0 C1383.6 801.3 1367.0 805.0 1361.6 811.2 C1356.2 817.4 1341.9 843.2 1340.5 853.5 C1339.0 863.8 1346.1 892.6 1349.2 899.5 C1352.2 906.5 1366.4 909.9 1366.6 913.2 C1366.7 916.6 1352.7 924.5 1350.4 928.1 C1348.1 931.8 1348.0 940.7 1346.7 944.3 C1345.4 948.0 1340.1 957.5 1339.2 959.3 M1339.2 959.3 C1346.0 965.3 1379.1 1003.8 1397.7 1011.5 C1416.3 1019.2 1487.3 1025.2 1498.5 1025.2 C1509.6 1025.2 1497.5 1017.5 1493.5 1011.5 C1489.4 1005.6 1468.7 980.6 1463.6 974.2 C1458.5 967.7 1452.8 958.4 1449.9 956.3 C1447.0 954.1 1440.0 956.0 1438.7 955.5 C1437.4 955.0 1436.1 955.1 1438.7 951.8 C1441.4 948.4 1458.4 933.0 1461.1 926.9 C1463.9 920.8 1461.8 904.5 1462.4 899.5 C1463.0 894.6 1468.6 890.4 1466.1 884.6 C1463.6 878.8 1444.9 854.1 1441.2 849.8 C1437.6 845.4 1436.2 848.7 1435.0 847.3 C1433.8 845.8 1432.9 839.2 1431.3 837.3 C1429.7 835.4 1422.8 833.1 1421.3 831.1 C1419.9 829.1 1420.9 823.0 1418.8 819.9 C1416.8 816.9 1405.8 807.3 1403.9 805.0 C1402.0 802.7 1402.8 800.6 1402.7 800.0 M1476.1 800.0 L1461.1 819.9 L1440.0 849.8 L1351.6 971.7 M1461.1 819.9 L1486.0 810.0 L1496.0 808.7 L1499.7 800.0 M1466.1 884.6 C1468.4 884.3 1481.7 881.1 1486.0 882.1 C1490.4 883.1 1498.5 891.7 1503.4 893.3 C1508.4 894.9 1521.9 894.9 1528.3 895.8 C1534.7 896.7 1554.1 899.4 1558.2 900.8 C1562.2 902.1 1560.5 907.2 1563.2 907.5 C1565.8 907.8 1577.7 903.0 1580.6 903.3 C1583.5 903.5 1583.7 910.8 1588.0 909.5 C1592.4 908.2 1613.0 895.8 1617.9 892.1 C1622.8 888.3 1628.9 880.6 1630.3 877.1 C1631.8 873.7 1628.0 865.5 1630.3 862.2 C1632.6 858.9 1647.7 850.1 1650.0 848.5 M1593.0 800.0 L1650.0 834.8 M1397.7 1011.5 C1401.0 1010.1 1421.5 1000.7 1426.3 999.1 C1431.1 997.5 1436.3 999.4 1438.7 997.8 C1441.2 996.2 1447.3 989.6 1447.4 985.4 C1447.6 981.2 1441.0 965.2 1440.0 961.7 C1439.0 958.3 1438.9 956.2 1438.7 955.5 M1547.0 1025.2 C1550.5 1023.6 1571.8 1012.5 1576.8 1011.5 C1581.9 1010.5 1587.5 1016.5 1590.5 1016.5 C1593.6 1016.4 1599.3 1010.9 1603.0 1011.0 C1606.6 1011.2 1617.9 1017.5 1621.6 1017.7 C1625.4 1017.9 1632.0 1015.5 1635.3 1012.8 C1638.6 1010.0 1648.3 996.3 1650.0 994.1 M1170.0 907.0 C1173.5 907.4 1193.8 911.9 1199.9 910.7 C1206.0 909.6 1218.2 898.6 1222.3 897.0 C1226.3 895.4 1232.5 895.4 1234.7 897.0 C1236.9 898.6 1239.2 906.2 1240.9 910.7 C1242.7 915.2 1248.2 932.0 1249.6 935.6 C1251.1 939.2 1254.8 939.7 1253.4 941.8 C1251.9 944.0 1237.6 950.8 1237.2 954.3 C1236.7 957.8 1248.2 968.2 1249.6 971.7 C1251.1 975.2 1251.7 981.8 1249.6 984.1 C1247.6 986.5 1234.8 989.9 1232.2 991.6 C1229.6 993.3 1230.1 996.9 1227.2 999.1 C1224.3 1001.2 1211.4 1010.8 1207.3 1010.3 C1203.3 1009.7 1194.1 996.8 1192.4 994.1 C1190.7 991.3 1190.7 989.2 1192.4 986.6 C1194.1 984.0 1205.6 973.4 1207.3 971.7 M1207.3 1010.3 C1210.2 1011.3 1227.3 1017.9 1232.2 1019.0 C1237.1 1020.0 1244.4 1018.5 1249.6 1019.5 C1254.9 1020.5 1272.1 1026.4 1277.0 1027.7 C1281.9 1028.9 1289.5 1031.8 1291.9 1030.2 C1294.4 1028.6 1298.6 1019.7 1298.1 1014.0 C1297.7 1008.3 1289.4 985.0 1288.2 981.2 M1170.0 941.8 L1184.9 940.6 L1194.9 944.3 L1201.1 941.3 L1203.6 949.3 M1170.0 909.5 L1217.3 919.4 M1222.3 899.5 C1221.7 901.3 1217.0 911.3 1217.3 914.5 C1217.6 917.7 1222.6 926.0 1224.7 926.9 C1226.9 927.8 1235.7 923.7 1235.9 921.9 C1236.2 920.2 1228.1 914.6 1227.2 912.0 C1226.4 909.4 1229.1 901.0 1228.5 899.5 C1227.9 898.1 1223.0 899.5 1222.3 899.5"/>
<path clip-path="url(#c11)" d="M1600.0 804.6 L1659.8 841.4 L1669.0 848.3 L1694.3 926.5 L1695.4 931.1 M1657.5 800.0 C1658.6 800.8 1664.8 804.6 1666.7 806.9 C1668.6 809.2 1673.3 816.6 1673.6 819.5 C1673.9 822.5 1670.5 829.6 1669.0 832.2 C1667.5 834.7 1663.6 839.4 1660.9 841.4 C1658.3 843.4 1649.4 847.2 1646.0 849.4 C1642.6 851.7 1633.9 858.7 1632.2 860.9 C1630.5 863.2 1631.3 866.9 1631.0 869.0 C1630.8 871.1 1630.8 877.3 1629.9 879.3 C1629.0 881.4 1624.5 885.2 1623.0 886.2 C1621.5 887.3 1618.3 887.7 1617.2 888.5 C1616.2 889.4 1615.8 891.7 1613.8 893.1 C1611.8 894.6 1601.6 900.3 1600.0 901.2 M1774.8 800.0 C1771.0 807.2 1748.0 852.7 1742.6 862.1 C1737.2 871.5 1731.5 876.2 1728.8 880.5 C1726.1 884.8 1722.3 894.9 1719.6 898.9 C1716.9 902.9 1708.7 911.2 1705.8 915.0 C1702.8 918.8 1696.7 927.1 1694.3 931.1 C1691.9 935.1 1689.9 942.9 1685.1 949.5 C1680.3 956.1 1657.2 981.8 1652.9 987.4 C1648.6 993.1 1650.4 994.8 1648.3 997.8 C1646.2 1000.7 1637.6 1010.5 1634.5 1012.7 C1631.4 1014.9 1625.6 1017.0 1621.8 1016.7 C1618.1 1016.3 1604.8 1010.5 1602.3 1009.8 C1599.8 1009.0 1600.3 1010.4 1600.0 1010.4"/>
<path clip-path="url(#c12)" d="M1030.0 428.0 L1040.3 441.2 L1049.1 455.9 L1056.5 462.6 L1065.3 462.6 L1069.7 460.6 L1077.1 461.8 L1083.0 467.7 L1091.8 476.5 L1103.6 488.3 L1115.4 497.1 L1127.1 506.0 L1136.0 513.3 L1147.8 523.6 L1159.5 533.9 L1171.3 543.5 L1183.1 553.1 M1069.7 458.9 L1081.5 442.7 L1096.2 433.9 L1116.8 422.1 L1136.0 416.2 L1152.2 414.0 L1158.1 411.0 L1166.9 413.2 L1175.7 421.3 L1178.7 427.2 L1186.0 430.9 L1191.9 441.2 L1196.3 451.5 L1199.3 457.4 L1197.8 461.8 L1191.9 469.2 L1184.6 473.6 M1119.1 400.0 L1119.8 411.8 L1118.3 422.1 L1116.8 433.9 L1116.1 448.6 L1118.3 458.9 L1124.2 469.2 M1121.3 423.6 L1131.6 436.8 M1121.3 425.0 L1125.7 436.8 L1131.6 451.5 L1138.9 464.8 L1147.8 478.0 L1158.1 489.8 L1168.4 500.1 L1178.7 508.9 L1186.0 517.8 M1133.0 453.0 L1149.2 445.6 L1156.6 447.1 L1165.4 447.1 L1184.6 442.0 L1189.0 451.5 L1191.9 460.3 L1197.8 457.4 M1174.3 454.5 L1191.9 460.3 M1156.6 447.1 L1159.5 461.8 L1156.6 470.7 L1152.2 475.1 L1146.3 479.5 M1138.9 454.5 L1146.3 479.5 M1146.3 455.9 L1152.2 473.6 M1118.3 460.3 L1133.0 458.1 M1121.3 464.8 L1134.5 463.3 M1122.7 470.7 L1136.0 469.2 M1124.2 481.0 L1137.5 475.1 M1113.9 461.8 L1116.8 470.7 L1122.7 469.2 M1088.9 470.7 L1100.7 461.8 M1094.8 478.0 L1106.5 467.7 M1096.2 488.3 L1112.4 476.5 L1112.4 488.3 L1103.6 492.7 M1045.5 508.2 L1075.6 488.3 L1096.2 517.8 L1065.3 536.9 L1045.5 508.2 M1052.1 514.8 L1080.0 495.7 M1058.0 522.2 L1085.9 503.0 M1065.3 529.5 L1091.8 510.4 M1060.9 500.1 L1072.7 535.4 M1030.0 529.5 L1041.8 528.1 L1058.0 532.5 L1071.2 528.1 L1083.0 523.6 L1091.8 519.2 L1100.7 511.9 L1109.5 506.0 L1118.3 504.5 L1119.8 511.9 L1113.9 514.8 M1058.0 544.3 L1074.2 535.4 L1088.9 525.1 L1103.6 514.8 L1118.3 506.0 L1130.1 497.1 L1141.9 488.3 L1156.6 479.5 L1171.3 472.1 L1178.7 469.2 M1065.3 554.6 L1081.5 544.3 L1096.2 533.9 L1112.4 523.6 L1127.1 513.3 L1141.9 503.0 L1156.6 494.2 L1168.4 486.8 L1184.6 476.5 L1194.9 470.7 M1077.1 560.0 L1094.8 548.7 L1109.5 538.4 L1124.2 529.5 L1138.9 520.7 L1153.6 510.4 L1165.4 503.0 L1177.2 495.7 L1186.0 488.3 M1097.7 525.9 L1112.4 514.8 L1130.1 503.0 M1108.0 529.5 L1118.3 541.3 L1130.1 553.1 M1118.3 520.7 L1133.0 535.4 L1144.8 547.2 M1130.1 513.3 L1141.9 525.1 L1152.2 535.4 M1141.9 503.0 L1155.1 514.8 L1168.4 526.6 L1177.2 535.4 M1153.6 494.2 L1166.9 506.0 L1177.2 514.8 L1191.9 528.1 M1162.5 482.4 L1174.3 492.7 L1186.0 503.0 M1174.3 473.6 L1186.0 483.9 L1197.8 495.7 L1208.1 506.0 M1162.5 553.1 L1178.7 536.9 L1194.9 519.2 L1208.1 503.0 L1222.8 486.8 L1237.5 470.7 L1250.8 458.9 L1265.5 444.2 L1280.2 429.4 L1289.1 420.6 M1150.7 528.1 L1168.4 511.9 L1183.1 494.2 L1196.3 482.4 L1206.6 473.6 L1224.3 457.4 L1239.0 444.2 L1256.7 426.5 L1271.4 417.7 L1277.3 419.1 M1244.9 432.4 L1256.7 420.6 L1271.4 428.0 M1244.9 432.4 L1262.6 444.2 M1237.5 444.2 L1252.3 454.5 L1253.7 463.3 L1246.4 470.7 L1236.1 464.8 L1224.3 458.9 M1265.5 441.2 L1250.8 458.9 M1216.9 479.5 L1221.4 473.6 L1225.8 475.8 L1222.8 478.7 L1216.9 479.5 M1234.6 511.9 L1240.5 500.1 L1256.7 511.9 L1249.3 517.8 L1236.1 516.3 M1240.5 503.0 L1242.0 514.8 M1218.4 514.8 L1216.9 526.6 L1225.8 525.1 L1242.0 517.8 M1225.8 514.8 L1225.8 529.5 M1271.4 441.2 L1280.2 436.8 L1294.9 447.1 L1292.0 453.0 L1280.2 454.5 L1271.4 441.2 M1278.8 442.7 L1289.1 458.9 M1256.7 400.0 L1256.7 411.8 L1262.6 416.2 L1274.3 419.1 L1283.2 420.6 L1294.9 426.5 L1302.3 433.9 L1306.7 444.2 L1305.3 461.8 L1300.8 469.2 L1280.2 473.6 L1278.8 488.3 L1271.4 506.0 L1264.0 513.3 L1268.5 517.8 L1280.2 519.2 L1310.0 516.3 M1177.2 526.6 L1191.9 522.2 L1200.7 528.1 L1202.2 533.9 L1184.6 532.5 L1183.1 529.5 M1180.1 536.9 L1183.1 539.8 L1180.1 545.7 M1203.7 405.9 L1211.0 429.4 L1212.5 432.4 L1221.4 447.1 M1196.3 439.7 L1211.0 431.6 M1214.0 442.7 L1218.4 442.7 M1194.9 441.2 L1199.3 439.7 L1205.2 450.0 L1199.3 448.6 L1194.9 441.2 M1168.4 475.1 L1171.3 479.5 L1177.2 472.1 L1181.6 470.7 M1156.6 482.4 L1162.5 491.3 L1171.3 491.3 L1174.3 488.3 M1130.1 520.7 L1136.0 526.6 L1133.0 529.5 M1150.7 525.1 L1166.9 515.5 L1175.7 525.1 L1166.9 536.9 M1206.6 486.8 L1200.7 494.2 M1187.5 463.3 L1196.3 469.2"/>
<path clip-path="url(#c13)" d="M1040.0 442.6 L1047.7 454.2 L1054.2 461.3 L1060.6 463.2 L1065.8 462.2 L1070.9 461.3 L1077.4 461.9 L1081.2 465.8 M1081.2 465.8 L1091.5 477.4 L1100.5 486.4 L1108.3 492.8 L1117.3 499.2 L1123.7 504.4 L1132.7 512.1 L1141.7 518.6 L1149.5 524.4 L1153.3 528.2 L1163.6 537.9 L1171.4 544.3 L1181.7 553.3 M1069.6 456.7 L1074.8 449.0 L1086.4 440.0 M1087.7 470.9 L1100.5 461.9 M1094.1 477.4 L1107.0 467.0 M1096.0 488.9 L1112.1 476.7 L1112.8 486.4 L1104.4 492.8 M1045.2 508.3 L1075.4 488.3 L1096.7 517.9 L1085.1 524.4 L1073.5 536.6 L1045.2 508.3 M1052.9 514.7 L1079.9 496.0 M1059.3 521.1 L1085.1 503.1 M1063.8 527.6 L1090.9 511.5 M1060.6 499.9 L1084.4 525.0 M1040.0 528.9 L1047.7 530.2 L1058.0 532.7 L1061.9 530.2 M1040.0 550.8 L1059.3 563.6 L1081.2 572.7 M1054.2 580.0 L1068.3 557.2 L1073.5 553.3 L1090.2 532.1 L1099.2 522.4 L1107.0 512.1 L1117.3 505.7 M1063.8 550.1 L1091.5 531.4 L1117.3 514.7 L1140.5 496.7 L1153.3 488.9 L1168.8 478.6 L1181.7 470.9 L1197.1 465.8 M1070.9 555.9 L1099.2 537.9 L1123.7 522.4 L1143.0 508.3 L1161.1 495.4 L1184.3 483.8 L1199.7 472.2 M1081.2 558.5 L1107.0 541.7 L1130.2 527.6 L1148.2 516.0 L1163.6 504.4 L1179.1 494.1 L1186.8 487.7 L1200.0 477.4 M1082.5 562.4 L1104.4 548.2 L1125.0 535.3 L1143.0 523.7 L1158.5 514.7 L1171.4 504.4 L1184.3 492.8 M1096.7 526.3 L1109.5 517.3 L1123.7 508.3 L1137.9 499.2 L1150.8 490.2 L1163.6 481.2 L1176.5 473.5 M1114.7 554.6 L1127.6 545.6 L1143.0 535.3 L1155.9 523.7 L1166.2 516.0 M1127.6 563.6 L1143.0 546.9 L1152.1 537.9 L1163.6 527.6 L1173.9 519.9 L1184.3 512.1 L1194.6 503.1 M1135.3 575.2 L1149.5 558.5 L1166.2 537.9 L1181.7 519.9 L1200.0 500.5 M1058.0 544.3 L1070.9 555.9 M1091.5 540.5 L1101.8 553.3 L1117.3 566.2 M1107.0 528.9 L1116.0 539.2 L1130.2 553.3 L1137.9 563.6 M1118.6 523.7 L1130.2 532.7 L1137.9 541.7 L1153.3 555.9 L1163.6 562.4 M1130.2 509.5 L1140.5 519.9 L1149.5 527.6 M1139.2 490.2 L1150.8 499.2 L1157.2 507.0 M1148.2 477.4 L1158.5 486.4 L1168.8 495.4 L1179.1 504.4 M1175.2 481.2 L1186.8 490.2 L1200.0 499.2 M1163.6 507.0 L1171.4 514.7 L1183.0 527.6 L1194.6 530.2 L1200.0 530.2 M1116.0 440.0 L1117.3 447.7 L1116.0 456.7 L1119.9 467.0 L1128.9 478.6 L1136.6 486.4 L1146.9 494.1 L1153.3 500.5 M1118.6 460.6 L1132.7 458.0 M1121.1 465.1 L1135.3 462.5 M1125.0 472.2 L1137.9 469.6 M1124.4 481.2 L1140.5 474.8 M1113.4 462.5 L1117.3 470.3 L1122.4 469.6 M1125.0 440.0 L1130.2 450.3 L1135.3 459.3 L1143.0 469.6 L1148.2 478.6 L1153.3 486.4 M1132.7 454.2 L1149.5 445.8 L1163.6 446.4 L1184.3 441.3 L1189.4 451.6 L1186.8 456.7 L1192.0 460.6 L1200.0 455.5 M1153.3 447.7 L1158.5 460.6 L1153.3 472.2 M1163.6 446.4 L1166.2 459.3 L1163.6 461.9 M1139.2 454.8 L1146.9 477.4 M1145.6 455.5 L1150.8 468.3 L1155.9 472.2 M1153.3 472.2 L1168.8 464.5 L1176.5 465.8 L1181.7 472.2 L1185.5 478.6 M1168.8 477.4 L1170.1 473.5 L1177.8 469.6 L1180.4 473.5 M1166.2 452.9 L1186.8 449.0 M1173.9 454.2 L1181.7 458.0 L1192.0 460.6 M1163.6 553.3 L1181.7 535.3 L1184.3 539.2 L1180.4 544.3 M1185.5 528.9 L1193.3 525.0 L1200.0 528.9 L1194.6 532.7 M1127.6 563.6 L1137.9 557.2 L1143.0 561.1 M1074.8 559.8 L1077.4 557.8 L1085.1 567.5 L1096.7 564.9 L1099.2 570.1 M1130.2 522.4 L1132.7 525.0 L1135.3 530.2 L1140.5 519.9 M1153.3 527.6 L1166.2 516.0 L1173.9 517.3 L1181.7 523.7 M1175.2 519.9 L1184.3 507.0 L1190.7 508.3 M1155.9 481.2 L1161.1 485.1 M1168.8 487.7 L1173.9 491.5 M1104.4 513.4 L1112.1 509.5 L1117.3 505.7 L1119.9 512.1"/>
<path clip-path="url(#c14)" d="M1095.0 598.5 L1115.0 584.3 L1132.8 572.9 L1137.8 570.0 M1095.0 606.4 L1112.1 591.4 L1130.6 578.6 L1144.9 572.9 L1157.7 570.0 M1132.8 570.0 L1137.8 577.1 L1144.9 587.1 L1154.9 607.8 M1118.5 596.8 L1144.9 587.4 L1174.9 578.3 M1136.4 595.7 L1179.1 583.1 M1137.8 600.7 L1182.0 588.5 M1142.1 606.4 L1194.8 590.7 M1129.2 594.2 L1137.8 604.2 M1134.2 590.0 L1139.2 604.2 M1166.3 580.7 L1177.7 609.2 M1182.0 588.5 L1189.8 604.9 L1177.7 608.5 M1159.2 607.8 L1170.6 603.5 L1174.1 612.8 M1154.9 608.5 L1174.9 612.8 L1193.4 624.2 L1213.4 642.7 L1235.0 646.3 M1177.7 608.5 L1194.8 615.6 L1197.7 619.9 M1188.4 580.7 L1197.7 579.3 L1209.1 584.3 L1220.5 611.4 L1214.8 622.8 L1209.1 623.5 M1193.4 585.7 L1203.4 585.7 L1213.4 611.4 L1210.5 617.1 L1194.8 624.2 M1197.7 599.9 L1213.4 597.1 M1201.9 604.2 L1211.9 602.1 M1199.1 587.8 L1207.6 618.5 M1154.9 608.5 L1149.2 624.2 L1137.8 635.6 L1122.1 649.9 L1116.4 651.3 L1126.4 661.3 L1133.5 664.1 L1137.8 669.8 L1130.6 681.2 L1122.1 694.1 L1103.6 704.0 L1102.1 706.9 M1115.7 604.2 L1120.7 600.7 L1129.2 600.7 L1134.9 604.2 M1112.1 607.1 L1110.7 619.9 L1116.4 624.2 L1110.7 625.6 L1109.3 632.7 L1115.0 637.0 L1127.8 638.4 M1116.4 607.1 L1116.4 619.9 L1133.5 634.2 L1143.5 629.9 L1134.9 624.2 L1123.5 612.8 L1122.1 617.1 L1134.9 631.3 M1123.5 605.6 L1140.6 617.1 L1149.2 618.5 L1144.9 612.8 M1127.8 638.4 L1134.9 641.3 L1149.2 651.3 L1157.7 668.4 L1160.6 672.7 L1159.2 681.2 L1162.0 694.1 L1157.7 704.0 M1134.9 641.3 L1142.1 638.4 L1153.5 634.2 L1154.9 635.6 L1144.9 639.9 M1119.2 651.3 L1132.1 645.6 L1144.9 655.6 L1137.8 661.3 M1151.3 662.7 L1157.7 669.8 L1160.6 672.7 M1149.2 624.2 L1162.0 634.2 L1166.3 645.6 M1103.6 703.3 L1116.4 708.3 L1140.6 716.2 L1163.4 706.9 L1157.7 681.2 L1149.2 678.4 L1137.8 668.4 M1116.4 708.3 L1162.0 694.1 M1123.5 698.3 L1157.7 684.1 M1127.8 691.2 L1152.0 678.4 M1132.1 685.5 L1149.2 672.7 M1123.5 701.2 L1132.1 714.0 M1130.6 696.9 L1137.8 712.6 M1137.8 695.5 L1144.9 711.2 M1144.9 694.1 L1152.0 708.3 M1110.7 696.2 L1122.1 682.6 M1127.8 678.4 L1137.8 668.4 M1163.4 679.8 L1183.4 672.0 L1187.7 678.4 L1183.4 681.2 L1162.0 688.4 M1163.4 684.1 L1177.7 678.4 M1163.4 691.2 L1180.6 684.1"/>
<path clip-path="url(#c15)" d="M1358.0 644.0 L1368.0 653.0 L1380.0 663.0"/>
</svg>
</div>

<!-- status bar -->
<div class="a" style="left:7px;top:1054px;width:1914px;height:27px;background:#efefef;border-top:1px solid #c4c4c4"></div>

<svg class="i" style="left:10px;top:65px" width="5" height="19" viewBox="0 0 5 19"><rect x="0" y="1" width="1.3" height="1.3" fill="#a9a9a9"/><rect x="3" y="1" width="1.3" height="1.3" fill="#a9a9a9"/><rect x="0" y="4" width="1.3" height="1.3" fill="#a9a9a9"/><rect x="3" y="4" width="1.3" height="1.3" fill="#a9a9a9"/><rect x="0" y="7" width="1.3" height="1.3" fill="#a9a9a9"/><rect x="3" y="7" width="1.3" height="1.3" fill="#a9a9a9"/><rect x="0" y="10" width="1.3" height="1.3" fill="#a9a9a9"/><rect x="3" y="10" width="1.3" height="1.3" fill="#a9a9a9"/><rect x="0" y="13" width="1.3" height="1.3" fill="#a9a9a9"/><rect x="3" y="13" width="1.3" height="1.3" fill="#a9a9a9"/><rect x="0" y="16" width="1.3" height="1.3" fill="#a9a9a9"/><rect x="3" y="16" width="1.3" height="1.3" fill="#a9a9a9"/></svg>
<svg class="i" style="left:22px;top:66px" width="16" height="16" viewBox="0 0 16 16"><path d="M3.5 0.5H10L13.5 4V15.5H3.5Z" fill="#fff" stroke="#b5b5b5"/><path d="M10 0.5V4H13.5" fill="#eee" stroke="#b5b5b5"/></svg>
<svg class="i" style="left:47px;top:66px" width="16" height="16" viewBox="0 0 16 16"><path d="M0.5 2.5H6L7.5 4H14.5V14.5H0.5Z" fill="#f2c530" stroke="#d9a91d"/><path d="M0.5 14.5L2.5 7H15.5L14.5 14.5Z" fill="#fcd94d" stroke="#e0b430" stroke-width="0.8"/></svg>
<svg class="i" style="left:72px;top:66px" width="16" height="16" viewBox="0 0 16 16"><rect x="0.5" y="0.5" width="14" height="14" rx="2" fill="#6794c9" stroke="#4f7fb8"/><rect x="2.5" y="1.5" width="10" height="4" fill="#cfcfcf"/><rect x="3" y="9" width="9" height="5" fill="#fff"/><rect x="4" y="10.5" width="2" height="2" fill="#2d4f7a"/></svg>
<svg class="i" style="left:97px;top:66px" width="16" height="16" viewBox="0 0 16 16"><rect x="0.5" y="0.5" width="14" height="14" rx="2" fill="#6794c9" stroke="#4f7fb8"/><rect x="2.5" y="1.5" width="10" height="4" fill="#cfcfcf"/><rect x="3" y="9" width="9" height="5" fill="#fff"/><rect x="4" y="10.5" width="2" height="2" fill="#2d4f7a"/><rect x="8.5" y="9" width="7" height="7" rx="1.5" fill="#4e9a4f"/><path d="M10.5 14L14 10.5" stroke="#fff" stroke-width="1.3"/></svg>
<svg class="i" style="left:122px;top:66px" width="16" height="16" viewBox="0 0 16 16"><path d="M2.5 0.5H11L14.5 4V14.5H2.5Z" fill="#f4f7fb" stroke="#b8b8b8"/><rect x="0.5" y="0.5" width="4" height="14" fill="#f2cf3a" stroke="#caa21c" stroke-width="0.8"/><rect x="8" y="8.5" width="7.5" height="7.5" rx="1" fill="#c9a100"/><circle cx="11.8" cy="12.2" r="2" fill="#fff"/></svg>
<svg class="i" style="left:147px;top:66px" width="16" height="16" viewBox="0 0 16 16"><path d="M0.5 0.5H12L15.5 4V13.5H0.5Z" fill="#e8eefa" stroke="#a8a8a8"/><path d="M6 4L13 13" stroke="#d4b12a" stroke-width="2.5"/><path d="M4 3A2.5 2.5 0 1 0 8 6" stroke="#777" stroke-width="1.6" fill="none"/></svg>
<svg class="i" style="left:176px;top:65px" width="5" height="19" viewBox="0 0 5 19"><rect x="0" y="1" width="1.3" height="1.3" fill="#a9a9a9"/><rect x="3" y="1" width="1.3" height="1.3" fill="#a9a9a9"/><rect x="0" y="4" width="1.3" height="1.3" fill="#a9a9a9"/><rect x="3" y="4" width="1.3" height="1.3" fill="#a9a9a9"/><rect x="0" y="7" width="1.3" height="1.3" fill="#a9a9a9"/><rect x="3" y="7" width="1.3" height="1.3" fill="#a9a9a9"/><rect x="0" y="10" width="1.3" height="1.3" fill="#a9a9a9"/><rect x="3" y="10" width="1.3" height="1.3" fill="#a9a9a9"/><rect x="0" y="13" width="1.3" height="1.3" fill="#a9a9a9"/><rect x="3" y="13" width="1.3" height="1.3" fill="#a9a9a9"/><rect x="0" y="16" width="1.3" height="1.3" fill="#a9a9a9"/><rect x="3" y="16" width="1.3" height="1.3" fill="#a9a9a9"/></svg>
<div class="a" style="left:184px;top:63px;width:24px;height:23px;background:#dcdcdc;border:1px solid #aaaaaa;border-radius:3px"></div>
<svg class="i" style="left:190px;top:66px" width="13" height="16" viewBox="0 0 13 16"><path d="M4 15L0.8 9.5C0.3 8.6 1.5 7.8 2.3 8.6L4 10.5V2.5C4 1.4 5.8 1.4 5.8 2.5V7.5V1.5C5.8 0.3 7.7 0.3 7.7 1.5V7.5V2C7.7 0.9 9.6 0.9 9.6 2V7.5V3C9.6 2 11.5 2 11.5 3V10.5C11.5 13 10.5 15 9.5 15.5Z" fill="#fff" stroke="#222" stroke-width="0.9"/></svg>
<svg class="i" style="left:213px;top:66px" width="16" height="16" viewBox="0 0 16 16"><rect x="1" y="1" width="9" height="9" fill="#f5dc3c"/><path d="M8 0L5.5 3H10.5ZM8 16L5.5 13H10.5ZM0 8L3 5.5V10.5ZM16 8L13 5.5V10.5Z" fill="#5b8fce"/><path d="M3 8H13M8 3V13" stroke="#5b8fce" stroke-width="2.5"/></svg>
<svg class="i" style="left:238px;top:66px" width="16" height="16" viewBox="0 0 16 16"><path d="M1 15L6 10" stroke="#333" stroke-width="2.6"/><path d="M1.2 14.8L4.2 11.8" stroke="#e6b92e" stroke-width="1.8"/><circle cx="10" cy="6" r="5.2" fill="#f2f2f2" stroke="#555" stroke-width="1"/><path d="M10 3V9M7 6H13" stroke="#4e86c6" stroke-width="2"/></svg>
<svg class="i" style="left:263px;top:66px" width="16" height="16" viewBox="0 0 16 16"><path d="M1 15L6 10" stroke="#333" stroke-width="2.6"/><path d="M1.2 14.8L4.2 11.8" stroke="#e6b92e" stroke-width="1.8"/><circle cx="10" cy="6" r="5.2" fill="#f2f2f2" stroke="#555" stroke-width="1"/><path d="M7 6H13" stroke="#4e86c6" stroke-width="2"/></svg>
<svg class="i" style="left:288px;top:66px" width="16" height="16" viewBox="0 0 16 16"><path d="M1 15L6 10" stroke="#333" stroke-width="2.6"/><path d="M1.2 14.8L4.2 11.8" stroke="#ddd" stroke-width="1.8"/><circle cx="10" cy="6" r="5.2" fill="#f2f2f2" stroke="#aaa" stroke-width="1"/><text x="10" y="8.3" font-size="6" text-anchor="middle" fill="#888" font-family="Liberation Sans">1:1</text></svg>
<svg class="i" style="left:313px;top:66px" width="16" height="16" viewBox="0 0 16 16"><path d="M1 15L6 10" stroke="#333" stroke-width="2.6"/><path d="M1.2 14.8L4.2 11.8" stroke="#e6b92e" stroke-width="1.8"/><path d="M1 0H6L1 5ZM16 0V5L11 0ZM16 16H11L16 11Z" fill="#4e86c6"/><path d="M2 2L5 5M14 2L11 5M14 14L11 11" stroke="#4e86c6" stroke-width="2"/></svg>
<svg class="i" style="left:338px;top:66px" width="16" height="16" viewBox="0 0 16 16"><rect x="1" y="1" width="6" height="10" fill="#f5dc3c" stroke="#d9b82a" stroke-width="0.6"/><path d="M1 15L6 10" stroke="#333" stroke-width="2.6"/><path d="M1.2 14.8L4.2 11.8" stroke="#e6b92e" stroke-width="1.8"/><circle cx="10" cy="6" r="5.2" fill="#ebe6d0" stroke="#555" stroke-width="1"/></svg>
<svg class="i" style="left:363px;top:66px" width="16" height="16" viewBox="0 0 16 16"><rect x="1" y="1" width="6" height="10" fill="#e6e6e6" stroke="#bdbdbd" stroke-width="0.6"/><path d="M1 15L6 10" stroke="#333" stroke-width="2.6"/><path d="M1.2 14.8L4.2 11.8" stroke="#e6b92e" stroke-width="1.8"/><circle cx="10" cy="6" r="5.2" fill="#f2f2f2" stroke="#555" stroke-width="1"/></svg>
<svg class="i" style="left:388px;top:66px" width="16" height="16" viewBox="0 0 16 16"><path d="M0.5 15.5L5 11" stroke="#333" stroke-width="2.4"/><path d="M0.8 15.2L3.5 12.5" stroke="#e6b92e" stroke-width="1.6"/><circle cx="8" cy="6" r="5" fill="#f0f0f0" stroke="#666"/><rect x="8" y="9" width="8" height="7" rx="1" fill="#5b8fce"/><path d="M13.5 10.5L10.5 12.5L13.5 14.5" stroke="#fff" stroke-width="1.3" fill="none"/></svg>
<svg class="i" style="left:413px;top:66px" width="16" height="16" viewBox="0 0 16 16"><path d="M0.5 15.5L5 11" stroke="#999" stroke-width="2.4"/><circle cx="8" cy="6" r="5" fill="#f3f3f3" stroke="#aaa"/><rect x="8" y="9" width="8" height="7" rx="1" fill="#b5b5b5"/><path d="M10.5 10.5L13.5 12.5L10.5 14.5" stroke="#fff" stroke-width="1.3" fill="none"/></svg>
<svg class="i" style="left:439px;top:66px" width="16" height="16" viewBox="0 0 16 16"><path d="M1.5 0.5H13.5V14.5H3A1.5 1.5 0 0 1 1.5 13Z" fill="#e7e7e7" stroke="#bdbdbd"/><path d="M3 1V14" stroke="#fff" stroke-width="0.8"/><rect x="8" y="8.5" width="7.5" height="7.5" rx="1" fill="#c9a100"/><circle cx="11.8" cy="12.2" r="2" fill="#fff"/></svg>
<svg class="i" style="left:464px;top:66px" width="16" height="16" viewBox="0 0 16 16"><path d="M1.5 0.5H13.5V14.5H3A1.5 1.5 0 0 1 1.5 13Z" fill="#e7e7e7" stroke="#bdbdbd"/><path d="M3 1V14" stroke="#fff" stroke-width="0.8"/><path d="M8 0H10.5V6L9.25 7.5L8 6Z" fill="#5b8fce"/><rect x="8" y="8.5" width="7.5" height="7.5" rx="1" fill="#c9a100"/><circle cx="11.8" cy="12.2" r="2" fill="#fff"/></svg>
<svg class="i" style="left:489px;top:66px" width="16" height="16" viewBox="0 0 16 16"><path d="M1.5 0.5H13.5V14.5H3A1.5 1.5 0 0 1 1.5 13Z" fill="#e7e7e7" stroke="#bdbdbd"/><path d="M3 1V14" stroke="#fff" stroke-width="0.8"/><path d="M8 0H10.5V6L9.25 7.5L8 6Z" fill="#5b8fce"/></svg>
<svg class="i" style="left:513px;top:66px" width="16" height="16" viewBox="0 0 16 16"><path d="M13.5 6A6 6 0 0 0 2.5 5" stroke="#3f7fcf" stroke-width="2.6" fill="none"/><path d="M14.5 1V7.5H8Z" fill="#3f7fcf"/><path d="M2.5 10A6 6 0 0 0 13.5 11" stroke="#3f7fcf" stroke-width="2.6" fill="none"/><path d="M1.5 15V8.5H8Z" fill="#3f7fcf"/></svg>
<svg class="i" style="left:542px;top:65px" width="5" height="19" viewBox="0 0 5 19"><rect x="0" y="1" width="1.3" height="1.3" fill="#a9a9a9"/><rect x="3" y="1" width="1.3" height="1.3" fill="#a9a9a9"/><rect x="0" y="4" width="1.3" height="1.3" fill="#a9a9a9"/><rect x="3" y="4" width="1.3" height="1.3" fill="#a9a9a9"/><rect x="0" y="7" width="1.3" height="1.3" fill="#a9a9a9"/><rect x="3" y="7" width="1.3" height="1.3" fill="#a9a9a9"/><rect x="0" y="10" width="1.3" height="1.3" fill="#a9a9a9"/><rect x="3" y="10" width="1.3" height="1.3" fill="#a9a9a9"/><rect x="0" y="13" width="1.3" height="1.3" fill="#a9a9a9"/><rect x="3" y="13" width="1.3" height="1.3" fill="#a9a9a9"/><rect x="0" y="16" width="1.3" height="1.3" fill="#a9a9a9"/><rect x="3" y="16" width="1.3" height="1.3" fill="#a9a9a9"/></svg>
<svg class="i" style="left:553px;top:66px" width="16" height="16" viewBox="0 0 16 16"><circle cx="6" cy="6.5" r="5.5" fill="#5b8fce"/><text x="6" y="10.5" font-size="9" font-weight="700" font-style="italic" text-anchor="middle" fill="#fff" font-family="Liberation Serif">i</text><path d="M8 8L8 15.5L10 13.5L12 16.5L13.5 15.5L11.5 12.5H14Z" fill="#fff" stroke="#333" stroke-width="0.7"/></svg>
<svg class="i" style="left:579px;top:66px" width="16" height="16" viewBox="0 0 16 16"><circle cx="6.5" cy="7" r="5.5" fill="#eee" stroke="#bbb" stroke-dasharray="1.5 1"/><circle cx="6.5" cy="7" r="3" fill="#fff" stroke="#aaa"/><path d="M5.8 5.5V8.5L8 7Z" fill="#aaa"/><path d="M9 9V15.5L10.7 13.8L12.3 16.3L13.6 15.5L12 13H14.3Z" fill="#fff" stroke="#aaa" stroke-width="0.7"/></svg>
<svg class="i" style="left:602px;top:73px" width="8" height="5" viewBox="0 0 8 5"><path d="M0 0H8L4 4Z" fill="#c9c9c9"/></svg>
<svg class="i" style="left:616px;top:66px" width="16" height="16" viewBox="0 0 16 16"><rect x="1.5" y="1.5" width="13" height="13" fill="none" stroke="#777" stroke-dasharray="1.5 1.2"/><rect x="1.5" y="2" width="9" height="10" fill="#fde84e"/><path d="M7 7V15.5L9 13.5L10.7 16.3L12 15.5L10.5 12.8H13.5Z" fill="#fff" stroke="#333" stroke-width="0.7"/></svg>
<svg class="i" style="left:638px;top:73px" width="8" height="5" viewBox="0 0 8 5"><path d="M0 0H8L4 4Z" fill="#4a4a4a"/></svg>
<svg class="i" style="left:653px;top:66px" width="16" height="16" viewBox="0 0 16 16"><rect x="0.5" y="0.5" width="14" height="14" rx="1" fill="#ebebeb" stroke="#b5b5b5"/><path d="M0.5 1.5V14.5H14Z" fill="#fde84e" stroke="#d9b82a" stroke-width="0.5"/><path d="M1 1L14.5 14.5" stroke="#333" stroke-width="0.8"/></svg>
<svg class="i" style="left:675px;top:73px" width="8" height="5" viewBox="0 0 8 5"><path d="M0 0H8L4 4Z" fill="#4a4a4a"/></svg>
<svg class="i" style="left:691px;top:66px" width="16" height="16" viewBox="0 0 16 16"><rect x="0.5" y="0.5" width="10" height="10" rx="1.5" fill="#fde84e" stroke="#e0c22a"/><rect x="7.5" y="7.5" width="8" height="8" rx="1" fill="#d32f2f"/><circle cx="11.5" cy="11.5" r="2.5" fill="none" stroke="#fff" stroke-width="1"/><path d="M9.5 13.5L13.5 9.5" stroke="#fff"/></svg>
<svg class="i" style="left:715px;top:66px" width="16" height="16" viewBox="0 0 16 16"><rect x="0.5" y="0.5" width="14" height="14" rx="1.5" fill="#e3ecf7" stroke="#86aee0"/><rect x="1" y="1" width="13" height="3" fill="#a9c6ea"/><path d="M2 7H5M7 7H13M2 9.5H5M7 9.5H13M2 12H5M7 12H13" stroke="#86aee0"/></svg>
<svg class="i" style="left:740px;top:66px" width="16" height="16" viewBox="0 0 16 16"><rect x="0.5" y="1" width="15" height="13.5" fill="#f4f4f4" stroke="#8a8a8a"/><path d="M0 15H16" stroke="#666" stroke-width="1.5"/><circle cx="5" cy="3.5" r="1.5" fill="#d33"/><circle cx="10.5" cy="3.5" r="1.5" fill="#d33"/><circle cx="4" cy="7" r="1.5" fill="#7bbf6a"/><circle cx="7" cy="7" r="1.5" fill="#7bbf6a"/><circle cx="5" cy="10.5" r="1.5" fill="#6a9fd8"/><circle cx="8" cy="10.5" r="1.5" fill="#6a9fd8"/><circle cx="11" cy="10.5" r="1.5" fill="#6a9fd8"/></svg>
<svg class="i" style="left:765px;top:66px" width="16" height="16" viewBox="0 0 16 16"><g stroke="#5b8fce" stroke-width="2"><path d="M8 1V15M1 8H15M3 3L13 13M13 3L3 13"/></g><circle cx="8" cy="8" r="4.5" fill="#5b8fce"/><circle cx="8" cy="8" r="1.8" fill="#fff"/></svg>
<svg class="i" style="left:790px;top:66px" width="16" height="16" viewBox="0 0 16 16"><path d="M13 1.5H2L7.5 8L2 14.5H13" fill="none" stroke="#9b1fa6" stroke-width="2.4" stroke-linejoin="miter"/><path d="M13 1V4M13 12V15" stroke="#9b1fa6" stroke-width="1.6"/></svg>
<svg class="i" style="left:815px;top:66px" width="16" height="16" viewBox="0 0 16 16"><path d="M1.5 4H14.5M1.5 2.5V5.5M14.5 2.5V5.5" stroke="#3d5f86" stroke-width="1.3"/><rect x="0.5" y="8.5" width="15" height="6" rx="1.5" fill="#aaa" stroke="#8a8a8a"/><path d="M3 11.5H6M8 11.5H13" stroke="#ddd"/></svg>
<svg class="i" style="left:837px;top:73px" width="8" height="5" viewBox="0 0 8 5"><path d="M0 0H8L4 4Z" fill="#4a4a4a"/></svg>
<svg class="i" style="left:852px;top:66px" width="16" height="16" viewBox="0 0 16 16"><rect x="0.5" y="0.5" width="15" height="9" rx="4" fill="#fbe98a" stroke="#e0cc5a"/><path d="M5 9L3.5 13L8 9.5" fill="#fbe98a" stroke="#e0cc5a" stroke-width="0.8"/><circle cx="3.5" cy="13.5" r="2" fill="#6aaa55"/></svg>
<svg class="i" style="left:877px;top:66px" width="16" height="16" viewBox="0 0 16 16"><rect x="0.5" y="0.5" width="15" height="11" rx="1.5" fill="#e9f0f6" stroke="#bdbdbd"/><path d="M2 11.5L1 15L5.5 11.5" fill="#e9f0f6" stroke="#bdbdbd" stroke-width="0.8"/><path d="M4.5 2.8H11.5M8 2.8V9.5" stroke="#555" stroke-width="1.6"/></svg>
<svg class="i" style="left:899px;top:73px" width="8" height="5" viewBox="0 0 8 5"><path d="M0 0H8L4 4Z" fill="#4a4a4a"/></svg>
<svg class="i" style="left:10px;top:96px" width="5" height="19" viewBox="0 0 5 19"><rect x="0" y="1" width="1.3" height="1.3" fill="#a9a9a9"/><rect x="3" y="1" width="1.3" height="1.3" fill="#a9a9a9"/><rect x="0" y="4" width="1.3" height="1.3" fill="#a9a9a9"/><rect x="3" y="4" width="1.3" height="1.3" fill="#a9a9a9"/><rect x="0" y="7" width="1.3" height="1.3" fill="#a9a9a9"/><rect x="3" y="7" width="1.3" height="1.3" fill="#a9a9a9"/><rect x="0" y="10" width="1.3" height="1.3" fill="#a9a9a9"/><rect x="3" y="10" width="1.3" height="1.3" fill="#a9a9a9"/><rect x="0" y="13" width="1.3" height="1.3" fill="#a9a9a9"/><rect x="3" y="13" width="1.3" height="1.3" fill="#a9a9a9"/><rect x="0" y="16" width="1.3" height="1.3" fill="#a9a9a9"/><rect x="3" y="16" width="1.3" height="1.3" fill="#a9a9a9"/></svg>
<svg class="i" style="left:23px;top:97px" width="16" height="16" viewBox="0 0 16 16"><path d="M1 15L2 11L9 1L12 3L5 13Z" fill="#c8c8c8" stroke="#a5a5a5" stroke-width="0.7"/><path d="M4 15L5 11L12 1L15 3L8 13Z" fill="#bdbdbd" stroke="#a5a5a5" stroke-width="0.7"/><path d="M11 14H15L13 16Z" fill="#c8c8c8"/></svg>
<svg class="i" style="left:48px;top:97px" width="16" height="16" viewBox="0 0 16 16"><path d="M1 15.5L2 11L9.5 1L12.5 3L5 13Z" fill="#e6d24a" stroke="#a89a2a" stroke-width="0.7"/><path d="M1 15.5L2 11L5 13Z" fill="#777"/></svg>
<svg class="i" style="left:72px;top:97px" width="16" height="16" viewBox="0 0 16 16"><rect x="0.5" y="0.5" width="13" height="14" rx="1.5" fill="#cfcfcf" stroke="#b0b0b0"/><rect x="3" y="1.5" width="8" height="4" fill="#e6e6e6"/><rect x="3" y="9" width="8" height="5" fill="#eee"/><path d="M9 15L15 9" stroke="#999" stroke-width="2"/></svg>
<svg class="i" style="left:97px;top:97px" width="16" height="16" viewBox="0 0 16 16"><path d="M1 1L6 11L11 3L15 3" stroke="#c0c0c0" fill="none"/><circle cx="1.5" cy="1.5" r="1.3" fill="none" stroke="#bbb"/><circle cx="11" cy="3" r="1.3" fill="none" stroke="#bbb"/><circle cx="15" cy="3" r="1.3" fill="none" stroke="#bbb"/><rect x="8.5" y="9" width="7" height="7" rx="1" fill="#c5c5c5"/><circle cx="12" cy="12.5" r="1.8" fill="#fff"/></svg>
<svg class="i" style="left:122px;top:97px" width="16" height="16" viewBox="0 0 16 16"><path d="M4 2H14M5 1V5M2 15L6 5" stroke="#c0c0c0" stroke-width="1"/><path d="M8 6L14 13M13 6L7 13" stroke="#b5b5b5" stroke-width="1.8"/></svg>
<svg class="i" style="left:147px;top:97px" width="16" height="16" viewBox="0 0 16 16"><rect x="0.5" y="1" width="13" height="3.5" rx="1" fill="#d8d8d8" stroke="#c5c5c5"/><rect x="0.5" y="6" width="13" height="3.5" rx="1" fill="#d8d8d8" stroke="#c5c5c5"/><rect x="0.5" y="11" width="13" height="3.5" rx="1" fill="#d8d8d8" stroke="#c5c5c5"/><path d="M5 15.5L7 10L14 0.5L16 2L9 11.5Z" fill="#cfcfcf" stroke="#aaa" stroke-width="0.7"/></svg>
<svg class="i" style="left:174px;top:97px" width="11" height="16" viewBox="0 0 11 16"><path d="M0 2.5H11M4 2.5V0.8H7V2.5" stroke="#8a8a8a" stroke-width="1.3" fill="none"/><path d="M1.5 4H9.5L9 15H2Z" fill="none" stroke="#8a8a8a" stroke-width="1.5"/><path d="M4 5.5V13M7 5.5V13" stroke="#8a8a8a" stroke-width="1.3"/></svg>
<svg class="i" style="left:197px;top:97px" width="16" height="16" viewBox="0 0 16 16"><path d="M0.5 3L10 9M0.5 10L10 6" stroke="#9a9a9a" stroke-width="1"/><circle cx="12.5" cy="4.5" r="2" fill="none" stroke="#8a8a8a" stroke-width="1.3"/><circle cx="12.5" cy="11" r="2" fill="none" stroke="#8a8a8a" stroke-width="1.3"/></svg>
<svg class="i" style="left:224px;top:97px" width="12" height="16" viewBox="0 0 12 16"><path d="M4.5 0.5H9L11.5 3V11.5H4.5Z" fill="#ececec" stroke="#d0d0d0"/><path d="M0.5 4.5H6L8 6.5V15.5H0.5Z" fill="#e3e3e3" stroke="#cfcfcf"/></svg>
<svg class="i" style="left:249px;top:97px" width="12" height="16" viewBox="0 0 12 16"><rect x="0.5" y="1" width="11" height="14.5" rx="1.5" fill="#d0d0d0" stroke="#c0c0c0"/><rect x="2.5" y="3" width="7" height="11" fill="#efefef"/><rect x="3" y="0" width="6" height="2.5" fill="#c5c5c5"/></svg>
<svg class="i" style="left:273px;top:97px" width="13" height="16" viewBox="0 0 13 16"><path d="M1 5.5L6 1V4C11 4 13 6.5 12 11C11 9 9 7.5 6 7.5V10.5Z" fill="#c5c5c5"/><path d="M6 7.5C9 7.5 11 9 12 11L10 14" stroke="#c5c5c5" stroke-width="2.5" fill="none"/></svg>
<svg class="i" style="left:298px;top:97px" width="13" height="16" viewBox="0 0 13 16"><path d="M12 5.5L7 1V4C2 4 0 6.5 1 11C2 9 4 7.5 7 7.5V10.5Z" fill="#c5c5c5"/><path d="M7 7.5C4 7.5 2 9 1 11L3 14" stroke="#c5c5c5" stroke-width="2.5" fill="none"/></svg>
<svg class="i" style="left:326px;top:96px" width="5" height="19" viewBox="0 0 5 19"><rect x="0" y="1" width="1.3" height="1.3" fill="#a9a9a9"/><rect x="3" y="1" width="1.3" height="1.3" fill="#a9a9a9"/><rect x="0" y="4" width="1.3" height="1.3" fill="#a9a9a9"/><rect x="3" y="4" width="1.3" height="1.3" fill="#a9a9a9"/><rect x="0" y="7" width="1.3" height="1.3" fill="#a9a9a9"/><rect x="3" y="7" width="1.3" height="1.3" fill="#a9a9a9"/><rect x="0" y="10" width="1.3" height="1.3" fill="#a9a9a9"/><rect x="3" y="10" width="1.3" height="1.3" fill="#a9a9a9"/><rect x="0" y="13" width="1.3" height="1.3" fill="#a9a9a9"/><rect x="3" y="13" width="1.3" height="1.3" fill="#a9a9a9"/><rect x="0" y="16" width="1.3" height="1.3" fill="#a9a9a9"/><rect x="3" y="16" width="1.3" height="1.3" fill="#a9a9a9"/></svg>
<svg class="i" style="left:338px;top:97px" width="16" height="16" viewBox="0 0 16 16"><path d="M0.5 5.5L3 1.5H14.5V9.5H3Z" fill="#f6dd4a" stroke="#d9b82a" stroke-width="0.8"/><text x="8.8" y="8.2" font-size="6.5" font-weight="700" text-anchor="middle" fill="#222" font-family="Liberation Sans">abc</text></svg>
<svg class="i" style="left:364px;top:97px" width="16" height="16" viewBox="0 0 16 16"><circle cx="5" cy="5.5" r="4.8" fill="#2c9a3a"/><path d="M5 5.5L5 0.7A4.8 4.8 0 0 1 9.6 4Z" fill="#f5d21b"/><path d="M5 5.5L9.6 4A4.8 4.8 0 0 1 6 10.2Z" fill="#c8222a"/><rect x="6" y="10" width="2.5" height="6" fill="#f5d21b"/><rect x="9" y="6" width="2.5" height="10" fill="#2c9a3a"/><rect x="12" y="11" width="2.5" height="5" fill="#c8222a"/></svg>
<div class="a" style="left:388px;top:97px;width:16px;height:14px;background:#e3ecf9;border:1.2px solid #6ea0e8"></div>
<svg class="i" style="left:389px;top:97px" width="16" height="16" viewBox="0 0 16 16"><path d="M0.5 5.5L3 1.5H14.5V9.5H3Z" fill="#f6dd4a" stroke="#d9b82a" stroke-width="0.8"/><text x="8.8" y="8.2" font-size="6.5" font-weight="700" text-anchor="middle" fill="#222" font-family="Liberation Sans">abc</text><circle cx="12" cy="11.5" r="3.3" fill="#b52a2a"/></svg>
<svg class="i" style="left:413px;top:97px" width="16" height="16" viewBox="0 0 16 16"><path d="M0.5 5.5L3 1.5H14.5V9.5H3Z" fill="#ececec" stroke="#c5c5c5" stroke-width="0.8"/><text x="8.8" y="8.2" font-size="6.5" font-weight="700" text-anchor="middle" fill="#9a9a9a" font-family="Liberation Sans">abc</text><circle cx="12" cy="12" r="3.3" fill="#9a9a9a"/></svg>
<svg class="i" style="left:438px;top:97px" width="16" height="16" viewBox="0 0 16 16"><path d="M0.5 5.5L3 1.5H14.5V9.5H3Z" fill="#ececec" stroke="#c5c5c5" stroke-width="0.8"/><text x="8.8" y="8.2" font-size="6.5" font-weight="700" text-anchor="middle" fill="#9a9a9a" font-family="Liberation Sans">abc</text><path d="M6 13C8 10.5 12 10.5 14 13C12 15.5 8 15.5 6 13Z" fill="#fff" stroke="#999" stroke-width="0.8"/><circle cx="10" cy="13" r="1.2" fill="#777"/></svg>
<svg class="i" style="left:463px;top:97px" width="16" height="16" viewBox="0 0 16 16"><path d="M0.5 5.5L3 1.5H14.5V9.5H3Z" fill="#ececec" stroke="#c5c5c5" stroke-width="0.8"/><text x="8.8" y="8.2" font-size="6.5" font-weight="700" text-anchor="middle" fill="#9a9a9a" font-family="Liberation Sans">abc</text><rect x="8.5" y="9" width="7" height="7" rx="1" fill="#9a9a9a"/><path d="M10 12.5H14M12.5 10.5L14.5 12.5L12.5 14.5" stroke="#fff" stroke-width="1.2" fill="none"/></svg>
<svg class="i" style="left:488px;top:97px" width="16" height="16" viewBox="0 0 16 16"><path d="M0.5 5.5L3 1.5H14.5V9.5H3Z" fill="#ececec" stroke="#c5c5c5" stroke-width="0.8"/><text x="8.8" y="8.2" font-size="6.5" font-weight="700" text-anchor="middle" fill="#9a9a9a" font-family="Liberation Sans">abc</text><rect x="8.5" y="9" width="7" height="7" rx="1" fill="#9a9a9a"/><circle cx="12" cy="12.5" r="2" fill="none" stroke="#fff" stroke-width="1"/></svg>
<svg class="i" style="left:513px;top:97px" width="16" height="16" viewBox="0 0 16 16"><path d="M0.5 5.5L3 1.5H14.5V9.5H3Z" fill="#ececec" stroke="#c5c5c5" stroke-width="0.8"/><text x="8.8" y="8.2" font-size="6.5" font-weight="700" text-anchor="middle" fill="#9a9a9a" font-family="Liberation Sans">abc</text><rect x="8.5" y="9" width="7" height="7" rx="1" fill="#a5a5a5"/><path d="M10 15L14.5 10.5" stroke="#fff" stroke-width="1.3"/></svg>
<svg class="i" style="left:542px;top:96px" width="5" height="19" viewBox="0 0 5 19"><rect x="0" y="1" width="1.3" height="1.3" fill="#a9a9a9"/><rect x="3" y="1" width="1.3" height="1.3" fill="#a9a9a9"/><rect x="0" y="4" width="1.3" height="1.3" fill="#a9a9a9"/><rect x="3" y="4" width="1.3" height="1.3" fill="#a9a9a9"/><rect x="0" y="7" width="1.3" height="1.3" fill="#a9a9a9"/><rect x="3" y="7" width="1.3" height="1.3" fill="#a9a9a9"/><rect x="0" y="10" width="1.3" height="1.3" fill="#a9a9a9"/><rect x="3" y="10" width="1.3" height="1.3" fill="#a9a9a9"/><rect x="0" y="13" width="1.3" height="1.3" fill="#a9a9a9"/><rect x="3" y="13" width="1.3" height="1.3" fill="#a9a9a9"/><rect x="0" y="16" width="1.3" height="1.3" fill="#a9a9a9"/><rect x="3" y="16" width="1.3" height="1.3" fill="#a9a9a9"/></svg>
<svg class="i" style="left:554px;top:97px" width="16" height="16" viewBox="0 0 16 16"><circle cx="8" cy="7" r="7" fill="#6f9bd1"/><path d="M3 4C5 3 6 5 5 7C4 9 6 10 7 8M10 2C12 4 13 5 11 6" stroke="#2d5a94" stroke-width="1.2" fill="none"/><circle cx="4.5" cy="13.5" r="2.5" fill="#fff" stroke="#000" stroke-width="1.6"/><circle cx="11.5" cy="13.5" r="2.5" fill="#fff" stroke="#000" stroke-width="1.6"/><path d="M3 12L5 9H11L13 12Z" fill="#000"/></svg>
<svg class="i" style="left:583px;top:96px" width="5" height="19" viewBox="0 0 5 19"><rect x="0" y="1" width="1.3" height="1.3" fill="#a9a9a9"/><rect x="3" y="1" width="1.3" height="1.3" fill="#a9a9a9"/><rect x="0" y="4" width="1.3" height="1.3" fill="#a9a9a9"/><rect x="3" y="4" width="1.3" height="1.3" fill="#a9a9a9"/><rect x="0" y="7" width="1.3" height="1.3" fill="#a9a9a9"/><rect x="3" y="7" width="1.3" height="1.3" fill="#a9a9a9"/><rect x="0" y="10" width="1.3" height="1.3" fill="#a9a9a9"/><rect x="3" y="10" width="1.3" height="1.3" fill="#a9a9a9"/><rect x="0" y="13" width="1.3" height="1.3" fill="#a9a9a9"/><rect x="3" y="13" width="1.3" height="1.3" fill="#a9a9a9"/><rect x="0" y="16" width="1.3" height="1.3" fill="#a9a9a9"/><rect x="3" y="16" width="1.3" height="1.3" fill="#a9a9a9"/></svg>
<svg class="i" style="left:596px;top:97px" width="14" height="16" viewBox="0 0 14 16"><rect x="0" y="0.5" width="14" height="15" rx="0.8" fill="#5b8fce"/><rect x="0" y="0.5" width="3.5" height="15" fill="#2f4156"/><text x="8.8" y="11.5" font-size="9.5" text-anchor="middle" fill="#fff" font-family="Liberation Sans">?</text></svg>
<svg class="i" style="left:624px;top:96px" width="5" height="19" viewBox="0 0 5 19"><rect x="0" y="1" width="1.3" height="1.3" fill="#a9a9a9"/><rect x="3" y="1" width="1.3" height="1.3" fill="#a9a9a9"/><rect x="0" y="4" width="1.3" height="1.3" fill="#a9a9a9"/><rect x="3" y="4" width="1.3" height="1.3" fill="#a9a9a9"/><rect x="0" y="7" width="1.3" height="1.3" fill="#a9a9a9"/><rect x="3" y="7" width="1.3" height="1.3" fill="#a9a9a9"/><rect x="0" y="10" width="1.3" height="1.3" fill="#a9a9a9"/><rect x="3" y="10" width="1.3" height="1.3" fill="#a9a9a9"/><rect x="0" y="13" width="1.3" height="1.3" fill="#a9a9a9"/><rect x="3" y="13" width="1.3" height="1.3" fill="#a9a9a9"/><rect x="0" y="16" width="1.3" height="1.3" fill="#a9a9a9"/><rect x="3" y="16" width="1.3" height="1.3" fill="#a9a9a9"/></svg>
<svg class="i" style="left:14px;top:125px" width="18" height="5" viewBox="0 0 18 5"><rect x="0" y="0" width="1.2" height="1.2" fill="#aaa"/><rect x="0" y="3" width="1.2" height="1.2" fill="#aaa"/><rect x="3" y="0" width="1.2" height="1.2" fill="#aaa"/><rect x="3" y="3" width="1.2" height="1.2" fill="#aaa"/><rect x="6" y="0" width="1.2" height="1.2" fill="#aaa"/><rect x="6" y="3" width="1.2" height="1.2" fill="#aaa"/><rect x="9" y="0" width="1.2" height="1.2" fill="#aaa"/><rect x="9" y="3" width="1.2" height="1.2" fill="#aaa"/><rect x="12" y="0" width="1.2" height="1.2" fill="#aaa"/><rect x="12" y="3" width="1.2" height="1.2" fill="#aaa"/><rect x="15" y="0" width="1.2" height="1.2" fill="#aaa"/><rect x="15" y="3" width="1.2" height="1.2" fill="#aaa"/></svg>
<svg class="i" style="left:13px;top:137px" width="16" height="16" viewBox="0 0 16 16"><path d="M1 6L7 3L9 12L3 14Z" fill="#e07b39"/><path d="M3 4L9 2L11 11L5 13Z" fill="#f2c12e"/><path d="M6 1.5L14 0.5L15.5 9L7.5 10.5Z" fill="#5b8fce" stroke="#3f6fa8" stroke-width="0.6"/><circle cx="13" cy="13" r="3.2" fill="#3c9a4a"/><path d="M13 11V15M11 13H15" stroke="#fff" stroke-width="1.3"/></svg>
<svg class="i" style="left:13px;top:161px" width="16" height="16" viewBox="0 0 16 16"><path d="M1 7L8 4L15 7V13L8 16L1 13Z" fill="#e9c21f" stroke="#b8950f" stroke-width="0.6"/><path d="M1 7L8 10L15 7" fill="none" stroke="#b8950f" stroke-width="0.6"/><circle cx="8" cy="6" r="5" fill="#7ea3cf"/><path d="M5 4L9 7M8 2L7 6" stroke="#2c4f7c" stroke-width="1"/><rect x="10" y="10" width="6" height="6" rx="1" fill="#f4e9b4" stroke="#c9a100"/></svg>
<svg class="i" style="left:13px;top:185px" width="16" height="16" viewBox="0 0 16 16"><path d="M1 2L6 13L10 3L15 3" fill="none" stroke="#3a4a5a" stroke-width="1.1"/><circle cx="1.5" cy="2" r="1.2" fill="#fff" stroke="#3a4a5a" stroke-width="0.7"/><circle cx="10" cy="3" r="1.2" fill="#fff" stroke="#3a4a5a" stroke-width="0.7"/><circle cx="15" cy="3" r="1.2" fill="#fff" stroke="#3a4a5a" stroke-width="0.7"/><rect x="10" y="10" width="6" height="6" rx="1" fill="#f4e9b4" stroke="#c9a100"/></svg>
<svg class="i" style="left:13px;top:209px" width="16" height="16" viewBox="0 0 16 16"><path d="M0.5 15.5C2 9 6 3 15 0.5C13 6 9 11 2 13Z" fill="#7ea3cf" stroke="#4a73a5" stroke-width="0.7"/><rect x="10" y="10" width="6" height="6" rx="1" fill="#f4e9b4" stroke="#c9a100"/></svg>
<svg class="i" style="left:13px;top:233px" width="16" height="16" viewBox="0 0 16 16"><rect x="1" y="4" width="12" height="8" rx="1" fill="#6f9bd1"/><path d="M3 1V4M5.5 1V4M8 1V4M10.5 1V4M3 12V15M5.5 12V15M8 12V15" stroke="#6f9bd1" stroke-width="1"/><rect x="10" y="10" width="6" height="6" rx="1" fill="#f4e9b4" stroke="#c9a100"/></svg>
<svg class="i" style="left:304px;top:125px" width="11" height="11" viewBox="0 0 11 11"><rect x="0.5" y="0.5" width="10" height="10" rx="2" fill="none" stroke="#7a7a7a"/><rect x="4" y="2.5" width="4.5" height="4.5" fill="none" stroke="#555" stroke-width="0.9"/><rect x="2.5" y="4" width="4.5" height="4.5" fill="#efefef" stroke="#555" stroke-width="0.9"/></svg>
<svg class="i" style="left:318px;top:125px" width="11" height="11" viewBox="0 0 11 11"><rect x="0.5" y="0.5" width="10" height="10" rx="2" fill="none" stroke="#7a7a7a"/><path d="M3 3L8 8M8 3L3 8" stroke="#555" stroke-width="1.6"/></svg>
<svg class="i" style="left:45px;top:147px" width="16" height="16" viewBox="0 0 16 16"><path d="M1 8L6 5L8 12L3 14Z" fill="#d33"/><path d="M1.5 6L7 3.5L8 8L2 10Z" fill="#5b8fce"/><path d="M2 4L8 2L8.5 6L3 8Z" fill="#f2d21b"/><path d="M6 9L9 6L12 9L9 13Z" fill="#c9a064"/><path d="M10 7L15 1" stroke="#c9a064" stroke-width="1.6"/></svg>
<svg class="i" style="left:71px;top:147px" width="16" height="16" viewBox="0 0 16 16"><rect x="0.5" y="6.5" width="9" height="9" fill="none" stroke="#888"/><rect x="3" y="3.5" width="9" height="9" fill="#f3f3f3" stroke="#888"/><path d="M7 9V1.5A1.5 1.5 0 0 1 10 1.5V9" fill="none" stroke="#4e7fbf" stroke-width="1"/><circle cx="12" cy="13" r="3" fill="#3c9a4a"/><circle cx="12" cy="13" r="1.3" fill="#fff"/></svg>
<svg class="i" style="left:95px;top:147px" width="18" height="16" viewBox="0 0 18 16"><path d="M0.5 7C4 2 12 2 15.5 7C12 12 4 12 0.5 7Z" fill="#f5f5f5" stroke="#9a9a9a" stroke-width="0.8"/><circle cx="7.5" cy="7" r="3.5" fill="#5b8fce"/><circle cx="7.5" cy="6.5" r="1.3" fill="#111"/><path d="M13 12H18L15.5 15Z" fill="#444"/></svg>
<svg class="i" style="left:121px;top:147px" width="15" height="16" viewBox="0 0 15 16"><path d="M0.5 1.5H14.5L9 9V15.5L6 14V9Z" fill="#5b8fce" stroke="#4a7ab8" stroke-width="0.6"/><rect x="1" y="1" width="13" height="2" fill="#f2d21b"/></svg>
<svg class="i" style="left:147px;top:147px" width="15" height="16" viewBox="0 0 15 16"><text x="0" y="10" font-size="12" fill="#9a9a9a" font-family="Liberation Serif">&#949;</text><rect x="7" y="8" width="7" height="8" rx="1.5" fill="none" stroke="#bbb" stroke-width="1.4"/></svg>
<svg class="i" style="left:167px;top:154px" width="8" height="5" viewBox="0 0 8 5"><path d="M0 0H8L4 4Z" fill="#cfcfcf"/></svg>
<svg class="i" style="left:183px;top:147px" width="16" height="16" viewBox="0 0 16 16"><path d="M0.5 2H14M1 2V14" stroke="#aaa" stroke-width="0.8"/><rect x="4" y="5" width="2.5" height="2.5" fill="#f7a81b"/><rect x="4" y="11" width="2.5" height="2.5" fill="#f7a81b"/><path d="M8.5 0H12.5V8H15.5L10.5 14.5L5.5 8H8.5Z" fill="#5b8fce" stroke="#3f6fa8" stroke-width="0.5"/></svg>
<svg class="i" style="left:208px;top:147px" width="16" height="16" viewBox="0 0 16 16"><path d="M0.5 2H14M1 2V14" stroke="#aaa" stroke-width="0.8"/><rect x="4" y="5" width="2.5" height="2.5" fill="#f7a81b"/><rect x="4" y="11" width="2.5" height="2.5" fill="#f7a81b"/><path d="M8.5 15H12.5V7H15.5L10.5 0.5L5.5 7H8.5Z" fill="#5b8fce" stroke="#3f6fa8" stroke-width="0.5"/></svg>
<svg class="i" style="left:233px;top:147px" width="15" height="16" viewBox="0 0 15 16"><rect x="0.5" y="1" width="11.5" height="11.5" fill="none" stroke="#888" stroke-width="1"/><rect x="8" y="10.5" width="6" height="5" rx="1.5" fill="#e23a3a"/><path d="M9.5 13H12.5" stroke="#fff" stroke-width="1.2"/></svg>
<div class="a" style="left:61px;top:174px;width:14px;height:14px;background:#fff;border:1px solid #a8a8a8"></div>
<svg class="i" style="left:63px;top:176px" width="10" height="10" viewBox="0 0 10 10"><path d="M1.5 5.5L4.2 8.8L8.8 1.5" fill="none" stroke="#222" stroke-width="2"/></svg>
<div class="a" style="left:81px;top:181px;width:16px;height:1px;background:#ffa31c"></div>
<div class="a" style="left:103px;top:188px;width:37px;height:1.3px;background:#000"></div>
<svg class="i" style="left:334px;top:581px" width="2" height="18" viewBox="0 0 2 18"><rect x="0" y="0" width="1.2" height="1.2" fill="#888"/><rect x="0" y="3" width="1.2" height="1.2" fill="#888"/><rect x="0" y="6" width="1.2" height="1.2" fill="#888"/><rect x="0" y="9" width="1.2" height="1.2" fill="#888"/><rect x="0" y="12" width="1.2" height="1.2" fill="#888"/><rect x="0" y="15" width="1.2" height="1.2" fill="#888"/></svg>
<div class="a" style="left:37px;top:1028px;width:64px;height:21px;background:linear-gradient(#f6f6f6,#ececec);border:1px solid #c2c2c2;border-bottom:none;border-radius:2px 2px 0 0"></div>
<div class="a" style="left:101px;top:1029px;width:73px;height:20px;background:#d9d9d9;border:1px solid #c2c2c2;border-bottom:none;border-radius:2px 2px 0 0"></div>
<div class="a" style="left:38px;top:1027px;width:294px;height:1px;background:#b4b4b4"></div>
<div class="a" style="left:9px;top:1058px;width:220px;height:23px;background:#fff;border:1px solid #bdbdbd;border-radius:3px"></div>
<svg class="i" style="left:18px;top:1064px" width="12" height="12" viewBox="0 0 12 12"><circle cx="4.5" cy="4.5" r="3.6" fill="none" stroke="#888" stroke-width="1.2"/><path d="M7 7L10.5 10.5" stroke="#888" stroke-width="1.5"/></svg>
<div class="a" style="left:1078px;top:1058px;width:117px;height:23px;background:#fff;border:1px solid #bdbdbd;border-radius:3px"></div>
<svg class="i" style="left:1199px;top:1062px" width="15" height="16" viewBox="0 0 15 16"><path d="M3 2C5 0.5 8 1 9.5 4L11 9C11.5 12 9 14.5 6.5 13.5C4 13 3 10.5 2.5 8Z" fill="#fff" stroke="#222" stroke-width="1.2"/><path d="M4 3L7 6" stroke="#222" stroke-width="1.3"/><circle cx="8" cy="10" r="1.5" fill="none" stroke="#666" stroke-width="0.8"/><path d="M11 3L14 1" stroke="#666" stroke-width="0.8" stroke-dasharray="1 1"/></svg>
<div class="a" style="left:1264px;top:1058px;width:96px;height:23px;background:#fff;border:1px solid #bdbdbd;border-radius:3px"></div>
<div class="a" style="left:1339px;top:1059px;width:20px;height:21px;background:linear-gradient(#fafafa,#ececec);border-left:1px solid #c8c8c8;border-radius:0 3px 3px 0"></div>
<svg class="i" style="left:1346px;top:1068px" width="8" height="5" viewBox="0 0 8 5"><path d="M0 0H8L4 4Z" fill="#555"/></svg>
<svg class="i" style="left:1365px;top:1062px" width="13" height="16" viewBox="0 0 13 16"><path d="M3 7V4.5A3.5 3.5 0 0 1 10 4.5V7" fill="none" stroke="#666" stroke-width="1.8"/><rect x="1" y="7" width="11" height="8" rx="1.5" fill="#666"/></svg>
<div class="a" style="left:1453px;top:1059px;width:94px;height:22px;background:#fff;border:1px solid #bdbdbd;border-radius:3px"></div>
<div class="a" style="left:1533px;top:1060px;width:13px;height:20px;background:linear-gradient(#fafafa,#ececec);border-left:1px solid #c8c8c8;border-radius:0 3px 3px 0"></div>
<svg class="i" style="left:1535px;top:1064px" width="9" height="12" viewBox="0 0 9 12"><path d="M1 4L4.5 0.5L8 4Z" fill="#666"/><path d="M1 8L4.5 11.5L8 8Z" fill="#666"/></svg>
<div class="a" style="left:1617px;top:1059px;width:91px;height:22px;background:#fff;border:1px solid #bdbdbd;border-radius:3px"></div>
<div class="a" style="left:1693px;top:1060px;width:14px;height:20px;background:linear-gradient(#fafafa,#ececec);border-left:1px solid #c8c8c8;border-radius:0 3px 3px 0"></div>
<svg class="i" style="left:1695px;top:1064px" width="9" height="12" viewBox="0 0 9 12"><path d="M1 4L4.5 0.5L8 4Z" fill="#666"/><path d="M1 8L4.5 11.5L8 8Z" fill="#666"/></svg>
<div class="a" style="left:1714px;top:1062px;width:14px;height:14px;background:#fff;border:1px solid #a8a8a8"></div>
<svg class="i" style="left:1716px;top:1064px" width="10" height="10" viewBox="0 0 10 10"><path d="M1.5 5.5L4.2 8.8L8.8 1.5" fill="none" stroke="#222" stroke-width="2"/></svg>
<svg class="i" style="left:1794px;top:1062px" width="16" height="16" viewBox="0 0 16 16"><circle cx="8" cy="8" r="6.5" fill="none" stroke="#777" stroke-width="1"/><ellipse cx="8" cy="8" rx="3" ry="6.5" fill="none" stroke="#777" stroke-width="0.9"/><path d="M1.5 8H14.5M2.5 4.5H13.5M2.5 11.5H13.5M8 1.5V14.5" stroke="#777" stroke-width="0.9"/></svg>
<svg class="i" style="left:1902px;top:1063px" width="16" height="16" viewBox="0 0 16 16"><path d="M8 0.5C12 0.5 15.5 3 15.5 6.5C15.5 9 13.5 11 11 11.8L14.5 14.5C12.5 14.5 10.5 13.5 9.5 12.5C9 12.6 8.5 12.6 8 12.6C4 12.6 0.5 10 0.5 6.5C0.5 3 4 0.5 8 0.5Z" fill="#6b6b6b"/><circle cx="4.5" cy="6.5" r="1.2" fill="#fff"/><circle cx="8.2" cy="6.5" r="1.2" fill="#fff"/><circle cx="11.8" cy="6.5" r="1.2" fill="#fff"/></svg>
<div class="t" style="left:830.0px;top:13.85px;font-size:14px;font-weight:700;color:#4b5962;transform-origin:0 0;transform:scaleX(1.1452)">*Basic Map - QGIS 0c62abed96 [tm]</div>
<div class="t" style="left:15.4px;top:41.84px;font-size:13.3px;font-weight:400;color:#1a1a1a;letter-spacing:-0.048px;">Project</div>
<div class="t" style="left:71.5px;top:41.84px;font-size:13.3px;font-weight:400;color:#1a1a1a;letter-spacing:-0.141px;">Edit</div>
<div class="t" style="left:109.0px;top:41.84px;font-size:13.3px;font-weight:400;color:#1a1a1a;letter-spacing:-0.065px;">View</div>
<div class="t" style="left:152.3px;top:41.84px;font-size:13.3px;font-weight:400;color:#1a1a1a;letter-spacing:0.009px;">Layer</div>
<div class="t" style="left:200.2px;top:41.84px;font-size:13.3px;font-weight:400;color:#1a1a1a;letter-spacing:0.108px;">Settings</div>
<div class="t" style="left:264.3px;top:41.84px;font-size:13.3px;font-weight:400;color:#1a1a1a;letter-spacing:-0.288px;">Plugins</div>
<div class="t" style="left:321.4px;top:41.84px;font-size:13.3px;font-weight:400;color:#1a1a1a;letter-spacing:0.279px;">Vector</div>
<div class="t" style="left:375.0px;top:41.84px;font-size:13.3px;font-weight:400;color:#1a1a1a;letter-spacing:-0.154px;">Raster</div>
<div class="t" style="left:428.4px;top:41.84px;font-size:13.3px;font-weight:400;color:#1a1a1a;letter-spacing:-0.075px;">Database</div>
<div class="t" style="left:500.0px;top:41.84px;font-size:13.3px;font-weight:400;color:#1a1a1a;letter-spacing:-0.455px;">Web</div>
<div class="t" style="left:541.2px;top:41.84px;font-size:13.3px;font-weight:400;color:#1a1a1a;letter-spacing:-0.220px;">Processing</div>
<div class="t" style="left:620.5px;top:41.84px;font-size:13.3px;font-weight:400;color:#1a1a1a;letter-spacing:-0.186px;">Help</div>
<div class="t" style="left:42.0px;top:123.74px;font-size:13.3px;font-weight:400;color:#000;letter-spacing:-0.184px;">Layers</div>
<div class="t" style="left:103.0px;top:174.74px;font-size:13.3px;font-weight:700;color:#000;letter-spacing:0.195px;">roads</div>
<div class="t" style="left:49.5px;top:1034.74px;font-size:13.3px;font-weight:400;color:#000;letter-spacing:-0.184px;">Layers</div>
<div class="t" style="left:113.0px;top:1033.74px;font-size:13.3px;font-weight:400;color:#000;letter-spacing:0.036px;">Browser</div>
<div class="t" style="left:38.0px;top:1062.74px;font-size:13.3px;font-weight:400;color:#8a8a8a;letter-spacing:0.243px;">Type to locate (Ctrl+K)</div>
<div class="t" style="left:237.5px;top:1063.74px;font-size:13.3px;font-weight:400;color:#000;letter-spacing:0.177px;">1 legend entries removed.</div>
<div class="t" style="left:1009.3px;top:1062.74px;font-size:13.3px;font-weight:400;color:#000;letter-spacing:-0.007px;">Coordinate</div>
<div class="t" style="left:1082.7px;top:1062.74px;font-size:13.3px;font-weight:400;color:#000;letter-spacing:0.096px;">20.3420,-33.9989</div>
<div class="t" style="left:1228.5px;top:1062.74px;font-size:13.3px;font-weight:400;color:#000;letter-spacing:-0.416px;">Scale</div>
<div class="t" style="left:1268.5px;top:1062.74px;font-size:13.3px;font-weight:400;color:#000;letter-spacing:0.070px;">1:32869</div>
<div class="t" style="left:1393.5px;top:1062.74px;font-size:13.3px;font-weight:400;color:#000;letter-spacing:0.089px;">Magnifier</div>
<div class="t" style="left:1458.2px;top:1062.74px;font-size:13.3px;font-weight:400;color:#000;letter-spacing:-0.205px;">100%</div>
<div class="t" style="left:1557.2px;top:1062.74px;font-size:13.3px;font-weight:400;color:#000;letter-spacing:0.053px;">Rotation</div>
<div class="t" style="left:1622.0px;top:1062.74px;font-size:13.3px;font-weight:400;color:#000;letter-spacing:0.125px;">0.0 °</div>
<div class="t" style="left:1733.2px;top:1062.74px;font-size:13.3px;font-weight:400;color:#000;letter-spacing:-0.125px;">Render</div>
<div class="t" style="left:1814.2px;top:1062.74px;font-size:13.3px;font-weight:400;color:#000;letter-spacing:-0.579px;">EPSG:4326</div>
<div class="a" style="left:36.0px;top:55px;width:3.0px;height:1px;background:#1a1a1a"></div>
<div class="a" style="left:71.5px;top:55px;width:8.9px;height:1px;background:#1a1a1a"></div>
<div class="a" style="left:109.0px;top:55px;width:8.9px;height:1px;background:#1a1a1a"></div>
<div class="a" style="left:152.3px;top:55px;width:7.4px;height:1px;background:#1a1a1a"></div>
<div class="a" style="left:200.2px;top:55px;width:8.9px;height:1px;background:#1a1a1a"></div>
<div class="a" style="left:264.3px;top:55px;width:8.9px;height:1px;background:#1a1a1a"></div>
<div class="a" style="left:344.4px;top:55px;width:3.7px;height:1px;background:#1a1a1a"></div>
<div class="a" style="left:375.0px;top:55px;width:9.6px;height:1px;background:#1a1a1a"></div>
<div class="a" style="left:428.4px;top:55px;width:9.6px;height:1px;background:#1a1a1a"></div>
<div class="a" style="left:500.0px;top:55px;width:12.6px;height:1px;background:#1a1a1a"></div>
<div class="a" style="left:561.2px;top:55px;width:6.6px;height:1px;background:#1a1a1a"></div>
<div class="a" style="left:620.5px;top:55px;width:9.6px;height:1px;background:#1a1a1a"></div>

<!-- red annotation boxes -->
<div class="red" style="left:5px;top:35px;width:1919px;height:3px"></div>
<div class="red" style="left:5px;top:35px;width:2px;height:1049px"></div>
<div class="red" style="left:1921px;top:35px;width:3px;height:1049px"></div>
<div class="red" style="left:5px;top:117px;width:1919px;height:4px"></div>
<div class="red" style="left:34px;top:117px;width:4px;height:935px"></div>
<div class="red" style="left:335px;top:117px;width:5px;height:935px"></div>
<div class="red" style="left:336px;top:121px;width:1588px;height:2px"></div>
<div class="red" style="left:5px;top:1049px;width:1919px;height:4px"></div>
<div class="red" style="left:231px;top:1049px;width:3px;height:35px"></div>
<div class="red" style="left:5px;top:1081px;width:1919px;height:3px"></div>

<!-- circles -->
<div class="circ" style="left:188px;top:178px">1</div>
<div class="circ" style="left:918px;top:57px">2</div>
<div class="circ" style="left:853px;top:517px">3</div>
<div class="circ" style="left:889px;top:1030px">4</div>
<div class="circ" style="left:2px;top:307px">5</div>
<div class="circ" style="left:173px;top:1028px">6</div>

<!-- black frame -->
<div class="a" style="left:0;top:0;width:1929px;height:4px;background:#000"></div>
<div class="a" style="left:0;top:0;width:5px;height:1087px;background:#000"></div>
<div class="a" style="left:1925px;top:0;width:4px;height:1087px;background:#000"></div>
<div class="a" style="left:0;top:1084px;width:1929px;height:3px;background:#000"></div>
</body></html>
